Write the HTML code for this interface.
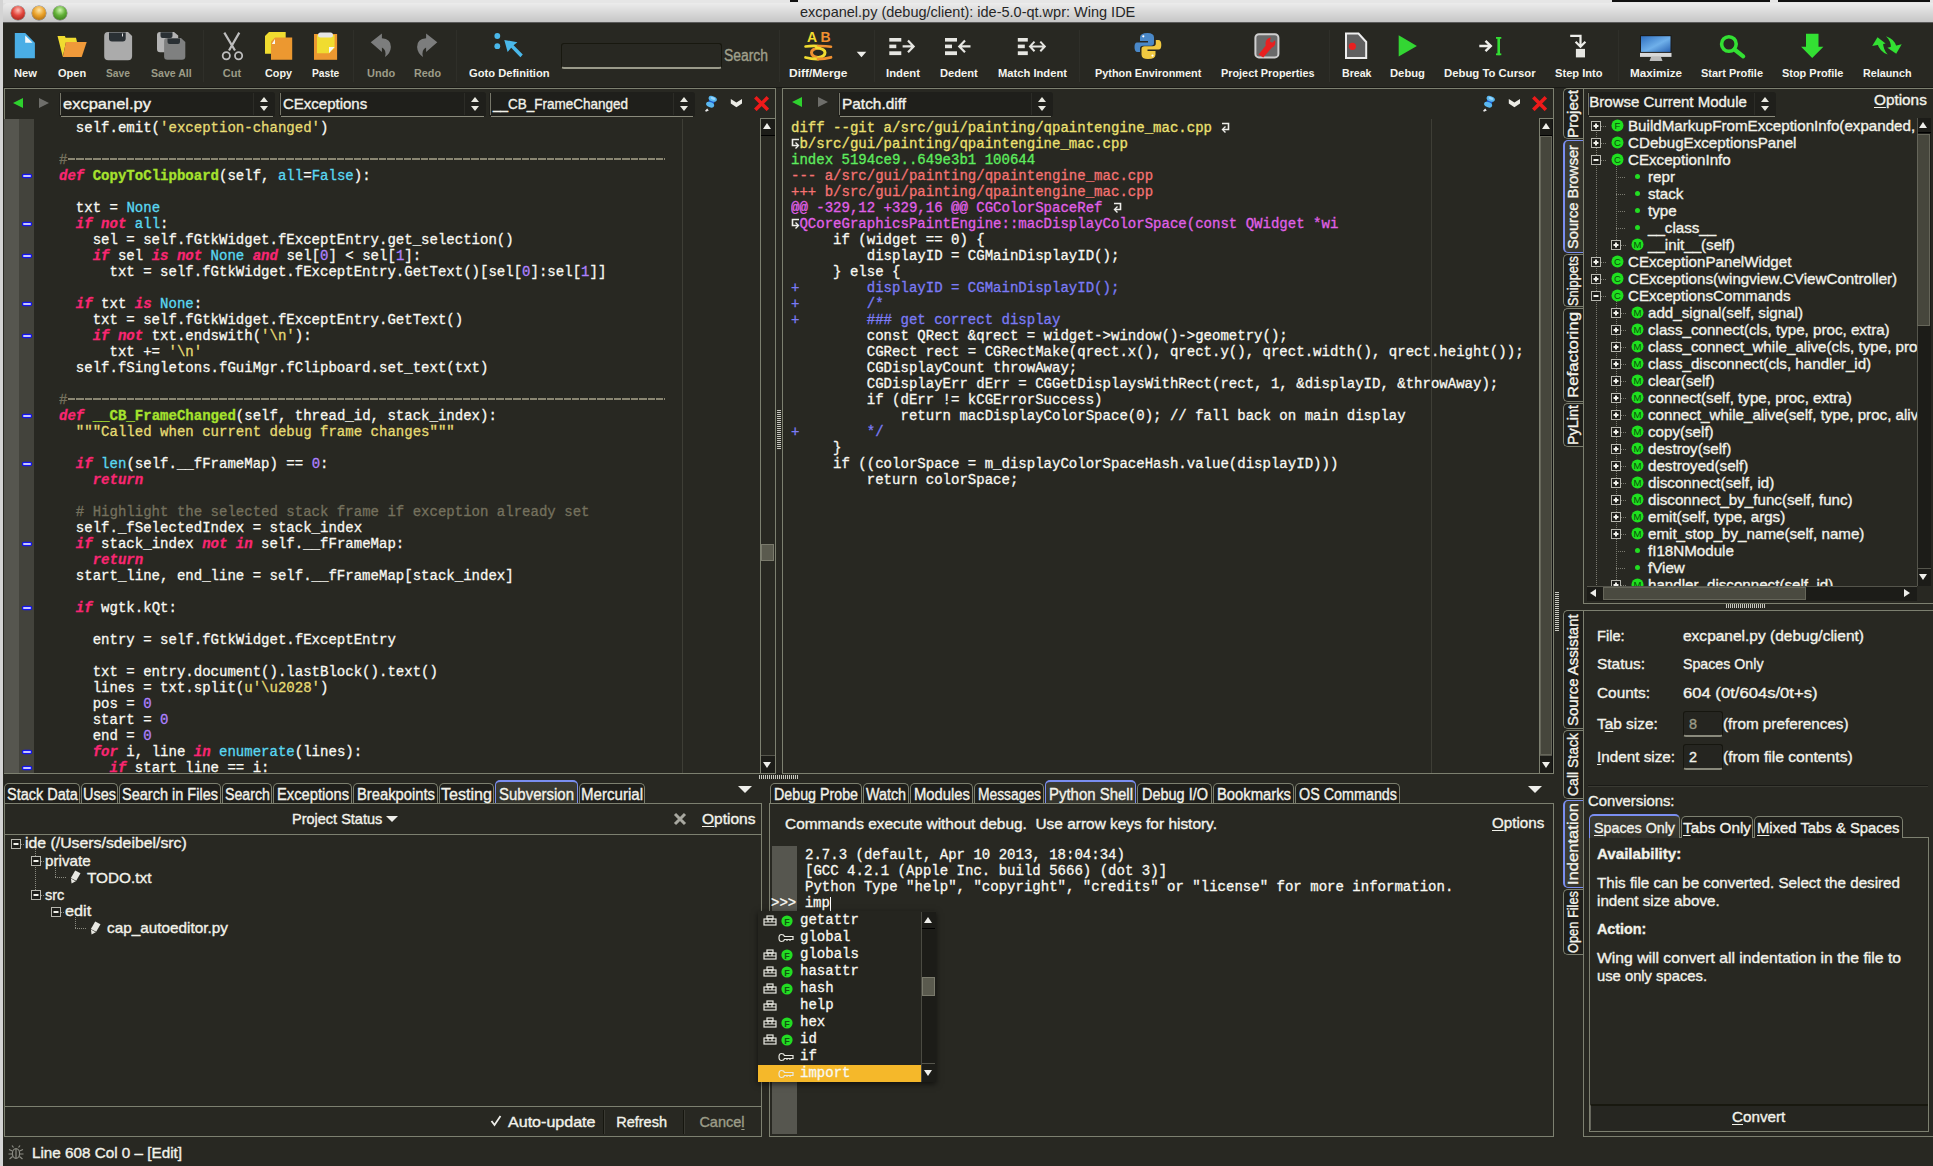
<!DOCTYPE html><html><head><meta charset="utf-8"><style>
*{box-sizing:border-box}
body{margin:0;width:1933px;height:1166px;overflow:hidden;background:#282822;position:relative;font-family:'Liberation Sans',sans-serif;color:#f2f2ea}
.a{position:absolute}
.t{position:absolute;white-space:pre;line-height:1;-webkit-text-stroke:0.35px currentColor}
u{text-decoration:underline;text-underline-offset:2px}
.m{font-family:"Liberation Mono",monospace;font-size:14.04px;white-space:pre;line-height:16px;-webkit-text-stroke:0.3px}
.k{color:#f92672;font-style:italic;font-weight:bold}
.g{color:#a6e22e;font-weight:bold}
.s{color:#e6db74}
.c{color:#5ad8f2}
.n{color:#ae81ff}
.cm{color:#75715e}
.dh{color:#ece070}
.di{color:#5eec5e}
.dm{color:#f47272}
.da{color:#e060e8}
.dp{color:#7b7bf5}
.wr{color:#c8c8c0}
</style></head><body>
<div class="a" style="left:0px;top:0px;width:1933px;height:3px;background:#e6e6e6;"></div>
<div class="a" style="left:790px;top:0px;width:8px;height:2px;background:#111;"></div>
<div class="a" style="left:1612px;top:0px;width:158px;height:2px;background:#111;"></div>
<div class="a" style="left:1778px;top:0px;width:152px;height:2px;background:#111;"></div>
<div class="a" style="left:0px;top:0px;width:3px;height:1166px;background:#d4d4d4;"></div>
<div class="a" style="left:3px;top:3px;width:8px;height:8px;background:#e0e0e0;"></div>
<div class="a" style="left:3px;top:3px;width:1930px;height:20px;background:linear-gradient(#ececec,#c4c4c4);border-top-left-radius:5px"></div>
<div class="a" style="left:3px;top:22px;width:1930px;height:1px;background:#5a5a5a;"></div>
<div class="t" style="left:800.00px;top:4.48px;font:normal normal 14.5px 'Liberation Sans';color:#262626;-webkit-text-stroke:0;">excpanel.py (debug/client): ide-5.0-qt.wpr: Wing IDE</div>
<div class="a" style="left:11px;top:5.5px;width:14px;height:14px;border-radius:7px;background:radial-gradient(circle at 50% 30%,#ffc0b8 0,#e2463c 45%,#8c1c14 100%);box-shadow:0 0 0 0.5px rgba(0,0,0,.45)"></div>
<div class="a" style="left:32px;top:5.5px;width:14px;height:14px;border-radius:7px;background:radial-gradient(circle at 50% 30%,#ffe6a8 0,#eaa22a 45%,#9a5a08 100%);box-shadow:0 0 0 0.5px rgba(0,0,0,.45)"></div>
<div class="a" style="left:53px;top:5.5px;width:14px;height:14px;border-radius:7px;background:radial-gradient(circle at 50% 30%,#d0f8b0 0,#62b038 45%,#2e6a14 100%);box-shadow:0 0 0 0.5px rgba(0,0,0,.45)"></div>
<svg class="a" style="left:0;top:0" width="1933" height="90" viewBox="0 0 1933 90"><path d="M14.8 33.1 H25.2 L34.9 42.8 V58.3 H14.8 Z" fill="#4aaee6"/><path d="M25.2 35.5 V42.8 H32.6 Z" fill="#f4f8fa"/><path d="M57.5 36.1 H64.9 L65.6 37.8 H76 L77 42 L66 42 L62.8 56.8 Z" fill="#f0dc30"/><path d="M65.9 42.1 H86.7 L81.7 57 H62.8 Z" fill="#f09a3a"/><path d="M108 32 H128 L132.1 36 V56 Q132.1 60.3 128 60.3 H108.3 Q104.2 60.3 104.2 56 V36 Q104.2 32 108 32 Z" fill="#ababab"/><path d="M109 32.5 H125.7 V38.5 Q125.7 41.5 122.7 41.5 H112 Q109 41.5 109 38.5 Z" fill="#2a3034"/><rect x="122" y="33.5" width="1" height="3" fill="#ddd"/><path d="M160 32 H174 L178.2 35.5 V49 Q178.2 52.2 175 52.2 H160 Q157 52.2 157 49 V35 Q157 32 160 32 Z" fill="#b4b4b4"/><path d="M160.5 32.3 H172.5 V36 Q172.5 38 170.5 38 H162.5 Q160.5 38 160.5 36 Z" fill="#2a3034"/><path d="M167 38.1 H181 L185.3 42 V56.5 Q185.3 59.8 182 59.8 H167.3 Q164.1 59.8 164.1 56.5 V41.3 Q164.1 38.1 167 38.1 Z" fill="#7f8080"/><path d="M167.5 38.4 H180 V42 Q180 44 178 44 H169.5 Q167.5 44 167.5 42 Z" fill="#2a3034"/><g stroke="#bdbdbd" fill="none"><path d="M224.3 32.6 L235 50.5 M239.3 32.6 L229 50.5" stroke-width="2.2"/><circle cx="226.3" cy="55.8" r="3.6" stroke-width="1.8"/><circle cx="238.6" cy="55.8" r="3.6" stroke-width="1.8"/></g><path d="M269 32 H285.7 V53.7 H265 V36 Z" fill="#f0dc30"/><path d="M275 37.6 H292.2 V59.8 H271 V41.6 Z" fill="#ec9830"/><path d="M275 39 V44 H271.8 Z" fill="#f8f8f4"/><rect x="314" y="34" width="23.1" height="25.8" fill="#ec9830"/><path d="M317 35 H334.6 V48 L329 53.2 H317 Z" fill="#f0dc30"/><path d="M334.6 47 L329 53.2 V47 Z" fill="#f8f8f4"/><rect x="318" y="32.6" width="15" height="5" rx="2.5" fill="#e4e4e4"/><path d="M370.7 42.2 L381.9 33.4 V38.3 Q391 38.8 390.9 47 Q390.6 53 385 57.1 Q387 50 381.9 47.5 V52 Z" fill="#7c7d7d"/><g transform="translate(808,0) scale(-1,1)"><path d="M370.7 42.2 L381.9 33.4 V38.3 Q391 38.8 390.9 47 Q390.6 53 385 57.1 Q387 50 381.9 47.5 V52 Z" fill="#7c7d7d"/></g><g fill="#4ab8ea"><circle cx="497.3" cy="36" r="2.9"/><circle cx="497.3" cy="46.2" r="2.9"/><path d="M504.3 39.9 L517.4 42.2 L513.6 45.2 L522.8 54.6 L520.4 57.2 L511.2 47.8 L507.6 52 Z"/></g><text x="812" y="42.2" font-family="Liberation Sans" font-size="14" font-weight="bold" text-anchor="middle" fill="#f0dc30">A</text><text x="825.5" y="42.2" font-family="Liberation Sans" font-size="14" font-weight="bold" text-anchor="middle" fill="#f09030">B</text><g fill="none" stroke-linecap="round"><path d="M805.5 46.5 Q812 45.5 818 46" stroke="#f0dc30" stroke-width="2.6"/><path d="M818 46 Q825 45.8 831 46.8" stroke="#f09030" stroke-width="2.6"/><path d="M819.5 47.8 Q811.5 49 811.5 52.5 Q811.5 56.5 818 57.5" stroke="#f09030" stroke-width="3"/><path d="M816.5 47.8 Q825 49 825 52.5 Q825 56.5 818.5 57.5" stroke="#f0dc30" stroke-width="3"/><path d="M805.5 57.5 Q812 59.2 818 59" stroke="#f0dc30" stroke-width="2.8"/><path d="M818 59 Q825 59 831 57.3" stroke="#f09030" stroke-width="2.8"/></g><path d="M856.7 51.7 H866.3 L861.5 57.2 Z" fill="#eeeeea"/><g fill="#e6e6e2"><rect x="889.3" y="38" width="12" height="3.6"/><rect x="889.3" y="44.6" width="7" height="3.6"/><rect x="889.3" y="51.3" width="12" height="3.8"/></g><g stroke="#e6e6e2" stroke-width="2.2" fill="none"><path d="M902.6 46.4 H913.5 M908 40.6 L913.6 46.4 L908 52.2"/></g><g fill="#e6e6e2"><rect x="945" y="38" width="12" height="3.6"/><rect x="945" y="44.6" width="7" height="3.6"/><rect x="945" y="51.3" width="12" height="3.8"/></g><g stroke="#e6e6e2" stroke-width="2.2" fill="none"><path d="M959.3 46.4 H970.5 M965 40.6 L959.3 46.4 L965 52.2"/></g><g fill="#e6e6e2"><rect x="1017.8" y="38" width="10" height="3.6"/><rect x="1017.8" y="44.6" width="7" height="3.6"/><rect x="1017.8" y="51.3" width="10" height="3.8"/></g><g stroke="#e6e6e2" stroke-width="2" fill="none"><path d="M1030 46.4 H1044.8 M1034.5 41.6 L1030 46.4 L1034.5 51.2 M1040.3 41.6 L1044.8 46.4 L1040.3 51.2"/></g><path d="M1147.5 33 Q1140 33 1140 37.5 V41 H1148 V42.5 H1137 Q1134.5 42.5 1134.5 47 Q1134.5 52 1137.5 52 H1140 V48.5 Q1140 45.8 1143 45.8 H1151 Q1154 45.8 1154 43 V37.5 Q1154 33 1147.5 33 Z" fill="#4a88c8"/><circle cx="1143.3" cy="36.3" r="1.1" fill="#fff"/><path d="M1148 58.9 Q1155.5 58.9 1155.5 54.4 V51 H1147.5 V49.5 H1158.5 Q1161.3 49.5 1161.3 45 Q1161.3 40 1158.3 40 H1155.8 V43.5 Q1155.8 46.2 1152.8 46.2 H1144.5 Q1141.5 46.2 1141.5 49 V54.4 Q1141.5 58.9 1148 58.9 Z" fill="#f0c840"/><circle cx="1152.5" cy="55.6" r="1.1" fill="#fff"/><rect x="1255.4" y="34.2" width="23" height="23.2" rx="3.5" fill="#6a6a6a" stroke="#cfcfcf" stroke-width="2"/><path d="M1258.6 54.6 L1265.8 45.6 Q1264.6 40.6 1268.5 38.2 L1270.8 37.6 L1269.8 41.4 L1272.2 42.8 L1275 40.2 Q1276.4 45 1272 47.6 L1263.2 57.6 Z" fill="#e82020"/><path d="M1346 33.6 H1358.5 L1366.2 42 V58 H1346 Z" fill="#606060" stroke="#eeeeee" stroke-width="2"/><circle cx="1352.4" cy="46.3" r="3.6" fill="#e82020"/><path d="M1398.7 35.3 L1416.9 46 L1398.7 56.6 Z" fill="#33d633"/><g stroke="#eeeeea" stroke-width="2.4" fill="none"><path d="M1479.3 46 H1490.5 M1485.5 40.8 L1490.8 46 L1485.5 51.2"/></g><g fill="#33dd33"><rect x="1497.4" y="37" width="2.6" height="18.2"/><rect x="1496" y="37" width="5.3" height="1.8"/><rect x="1496" y="53.4" width="5.3" height="1.8"/></g><g stroke="#eeeeea" stroke-width="2.2" fill="none"><path d="M1570.2 35.8 H1580.5 V46.5 M1575.6 41.8 L1580.5 46.8 L1585.4 41.8"/></g><rect x="1575.9" y="48.9" width="9.1" height="8.5" fill="#e6e6e2"/><defs><linearGradient id="scr" x1="0" y1="0" x2="1" y2="1"><stop offset="0" stop-color="#2f6fc0"/><stop offset=".55" stop-color="#6fb0ea"/><stop offset="1" stop-color="#2a64b4"/></linearGradient></defs><rect x="1640" y="35.2" width="31.5" height="17.7" fill="#1a1a1a"/><rect x="1641" y="36.2" width="29.5" height="15.7" fill="url(#scr)"/><rect x="1640" y="52.9" width="31.5" height="4" fill="#d8d8d8"/><path d="M1651 57 H1661 L1662.5 61 H1649.5 Z" fill="#bcbcbc"/><g stroke="#33e033" fill="none"><circle cx="1728.9" cy="44" r="7.3" stroke-width="3.6"/><path d="M1734.5 49.5 L1743.2 56.3" stroke-width="4.2" stroke-linecap="round"/></g><path d="M1806 33.7 H1818.5 V46.7 H1823.4 L1812.2 58.1 L1801.1 46.7 H1806 Z" fill="#33e033"/><g fill="#33e033"><path d="M1872.2 46 L1877.5 37.3 L1885.6 43.5 Z"/><path d="M1877.6 44 Q1879.5 51.5 1887.7 54.6 Q1883.4 50 1883 43 Z"/><path d="M1896.2 53.7 L1887.4 47.8 L1901.7 44.3 Z"/><path d="M1886 36.2 Q1894.5 39 1896.5 46.5 L1890.8 48 Q1891.5 41.5 1886 36.2 Z"/></g></svg>
<div class="t" style="left:14.00px;top:67.42px;font:normal bold 11px 'Liberation Sans';color:#f4f4ee;transform:scaleX(1.0166);transform-origin:0 0;-webkit-text-stroke:0;">New</div>
<div class="t" style="left:58.00px;top:67.42px;font:normal bold 11px 'Liberation Sans';color:#f4f4ee;-webkit-text-stroke:0;">Open</div>
<div class="t" style="left:106.00px;top:67.42px;font:normal bold 11px 'Liberation Sans';color:#9c9c88;transform:scaleX(0.9337);transform-origin:0 0;-webkit-text-stroke:0;">Save</div>
<div class="t" style="left:150.65px;top:67.42px;font:normal bold 11px 'Liberation Sans';color:#9c9c88;transform:scaleX(0.9598);transform-origin:0 0;-webkit-text-stroke:0;">Save All</div>
<div class="t" style="left:222.80px;top:67.42px;font:normal bold 11px 'Liberation Sans';color:#9c9c88;-webkit-text-stroke:0;">Cut</div>
<div class="t" style="left:264.90px;top:67.42px;font:normal bold 11px 'Liberation Sans';color:#f4f4ee;transform:scaleX(0.9818);transform-origin:0 0;-webkit-text-stroke:0;">Copy</div>
<div class="t" style="left:311.75px;top:67.42px;font:normal bold 11px 'Liberation Sans';color:#f4f4ee;transform:scaleX(0.9299);transform-origin:0 0;-webkit-text-stroke:0;">Paste</div>
<div class="t" style="left:367.00px;top:67.42px;font:normal bold 11px 'Liberation Sans';color:#9c9c88;-webkit-text-stroke:0;">Undo</div>
<div class="t" style="left:414.30px;top:67.42px;font:normal bold 11px 'Liberation Sans';color:#9c9c88;transform:scaleX(0.9818);transform-origin:0 0;-webkit-text-stroke:0;">Redo</div>
<div class="t" style="left:469.00px;top:67.42px;font:normal bold 11px 'Liberation Sans';color:#f4f4ee;transform:scaleX(1.0146);transform-origin:0 0;-webkit-text-stroke:0;">Goto Definition</div>
<div class="t" style="left:789.05px;top:67.42px;font:normal bold 11px 'Liberation Sans';color:#f4f4ee;transform:scaleX(1.0877);transform-origin:0 0;-webkit-text-stroke:0;">Diff/Merge</div>
<div class="t" style="left:886.00px;top:67.42px;font:normal bold 11px 'Liberation Sans';color:#f4f4ee;transform:scaleX(1.0303);transform-origin:0 0;-webkit-text-stroke:0;">Indent</div>
<div class="t" style="left:939.60px;top:67.42px;font:normal bold 11px 'Liberation Sans';color:#f4f4ee;transform:scaleX(1.0139);transform-origin:0 0;-webkit-text-stroke:0;">Dedent</div>
<div class="t" style="left:997.80px;top:67.42px;font:normal bold 11px 'Liberation Sans';color:#f4f4ee;transform:scaleX(1.0170);transform-origin:0 0;-webkit-text-stroke:0;">Match Indent</div>
<div class="t" style="left:1094.85px;top:67.42px;font:normal bold 11px 'Liberation Sans';color:#f4f4ee;transform:scaleX(0.9883);transform-origin:0 0;-webkit-text-stroke:0;">Python Environment</div>
<div class="t" style="left:1220.55px;top:67.42px;font:normal bold 11px 'Liberation Sans';color:#f4f4ee;transform:scaleX(0.9866);transform-origin:0 0;-webkit-text-stroke:0;">Project Properties</div>
<div class="t" style="left:1341.55px;top:67.42px;font:normal bold 11px 'Liberation Sans';color:#f4f4ee;transform:scaleX(0.9647);transform-origin:0 0;-webkit-text-stroke:0;">Break</div>
<div class="t" style="left:1390.00px;top:67.42px;font:normal bold 11px 'Liberation Sans';color:#f4f4ee;transform:scaleX(1.0224);transform-origin:0 0;-webkit-text-stroke:0;">Debug</div>
<div class="t" style="left:1444.15px;top:67.42px;font:normal bold 11px 'Liberation Sans';color:#f4f4ee;transform:scaleX(1.0302);transform-origin:0 0;-webkit-text-stroke:0;">Debug To Cursor</div>
<div class="t" style="left:1555.20px;top:67.42px;font:normal bold 11px 'Liberation Sans';color:#f4f4ee;transform:scaleX(1.0114);transform-origin:0 0;-webkit-text-stroke:0;">Step Into</div>
<div class="t" style="left:1630.00px;top:67.42px;font:normal bold 11px 'Liberation Sans';color:#f4f4ee;transform:scaleX(1.0629);transform-origin:0 0;-webkit-text-stroke:0;">Maximize</div>
<div class="t" style="left:1701.00px;top:67.42px;font:normal bold 11px 'Liberation Sans';color:#f4f4ee;transform:scaleX(0.9942);transform-origin:0 0;-webkit-text-stroke:0;">Start Profile</div>
<div class="t" style="left:1781.80px;top:67.42px;font:normal bold 11px 'Liberation Sans';color:#f4f4ee;transform:scaleX(0.9946);transform-origin:0 0;-webkit-text-stroke:0;">Stop Profile</div>
<div class="t" style="left:1862.55px;top:67.42px;font:normal bold 11px 'Liberation Sans';color:#f4f4ee;transform:scaleX(0.9795);transform-origin:0 0;-webkit-text-stroke:0;">Relaunch</div>
<div class="a" style="left:203px;top:30px;width:1px;height:52px;background:#2f2f29;"></div>
<div class="a" style="left:353px;top:30px;width:1px;height:52px;background:#2f2f29;"></div>
<div class="a" style="left:456px;top:30px;width:1px;height:52px;background:#2f2f29;"></div>
<div class="a" style="left:779px;top:30px;width:1px;height:52px;background:#2f2f29;"></div>
<div class="a" style="left:874px;top:30px;width:1px;height:52px;background:#2f2f29;"></div>
<div class="a" style="left:1079px;top:30px;width:1px;height:52px;background:#2f2f29;"></div>
<div class="a" style="left:1329px;top:30px;width:1px;height:52px;background:#2f2f29;"></div>
<div class="a" style="left:1618px;top:30px;width:1px;height:52px;background:#2f2f29;"></div>
<div class="a" style="left:561px;top:43px;width:161px;height:26px;background:#282822;border-radius:3px;border:1px solid #18180f;border-bottom:2px solid #9a9a8a"></div>
<div class="t" style="left:724.00px;top:46.70px;font:normal normal 16px 'Liberation Sans';color:#a0a08c;transform:scaleX(0.8678);transform-origin:0 0;">Search</div>
<div class="a" style="left:3px;top:87px;width:1930px;height:1px;background:#1a1a16;"></div>
<div class="a" style="left:4px;top:88px;width:772px;height:686px;border:1px solid #7d8070;"></div>
<div class="a" style="left:782px;top:88px;width:772px;height:686px;border:1px solid #7d8070;"></div>
<div class="a" style="left:13px;top:98px;width:0;height:0;border-top:5.5px solid transparent;border-bottom:5.5px solid transparent;border-right:10px solid #2ed12e"></div>
<div class="a" style="left:39px;top:98px;width:0;height:0;border-top:5.5px solid transparent;border-bottom:5.5px solid transparent;border-left:10px solid #6e6e6a"></div>
<div class="a" style="left:59px;top:92px;width:216px;height:25px;background:#1f1f1b;border-radius:3px"></div>
<div class="a" style="left:60px;top:93px;width:1px;height:22px;background:#77776a;"></div>
<div class="a" style="left:61px;top:116px;width:212px;height:1px;background:#8a8a7c;"></div>
<div class="a" style="left:253px;top:93px;width:1px;height:22px;background:#2c2c27;"></div>
<div class="a" style="left:260px;top:97px;width:0;height:0;border-left:4.0px solid transparent;border-right:4.0px solid transparent;border-bottom:5px solid #e8e8e0"></div>
<div class="a" style="left:260px;top:106px;width:0;height:0;border-left:4.0px solid transparent;border-right:4.0px solid transparent;border-top:5px solid #e8e8e0"></div>
<div class="t" style="left:63.00px;top:94.54px;font:normal normal 15px 'Liberation Sans';transform:scaleX(1.0991);transform-origin:0 0;">excpanel.py</div>
<div class="a" style="left:279px;top:92px;width:207px;height:25px;background:#1f1f1b;border-radius:3px"></div>
<div class="a" style="left:280px;top:93px;width:1px;height:22px;background:#77776a;"></div>
<div class="a" style="left:281px;top:116px;width:203px;height:1px;background:#8a8a7c;"></div>
<div class="a" style="left:464px;top:93px;width:1px;height:22px;background:#2c2c27;"></div>
<div class="a" style="left:471px;top:97px;width:0;height:0;border-left:4.0px solid transparent;border-right:4.0px solid transparent;border-bottom:5px solid #e8e8e0"></div>
<div class="a" style="left:471px;top:106px;width:0;height:0;border-left:4.0px solid transparent;border-right:4.0px solid transparent;border-top:5px solid #e8e8e0"></div>
<div class="t" style="left:283.00px;top:94.54px;font:normal normal 15px 'Liberation Sans';">CExceptions</div>
<div class="a" style="left:489px;top:92px;width:206px;height:25px;background:#1f1f1b;border-radius:3px"></div>
<div class="a" style="left:490px;top:93px;width:1px;height:22px;background:#77776a;"></div>
<div class="a" style="left:491px;top:116px;width:202px;height:1px;background:#8a8a7c;"></div>
<div class="a" style="left:673px;top:93px;width:1px;height:22px;background:#2c2c27;"></div>
<div class="a" style="left:680px;top:97px;width:0;height:0;border-left:4.0px solid transparent;border-right:4.0px solid transparent;border-bottom:5px solid #e8e8e0"></div>
<div class="a" style="left:680px;top:106px;width:0;height:0;border-left:4.0px solid transparent;border-right:4.0px solid transparent;border-top:5px solid #e8e8e0"></div>
<div class="t" style="left:493.00px;top:94.54px;font:normal normal 15px 'Liberation Sans';transform:scaleX(0.8994);transform-origin:0 0;">__CB_FrameChanged</div>
<svg class="a" style="left:703px;top:94px" width="16" height="18" viewBox="0 0 16 18"><path d="M5.8 16.5 L3 17.8 L2 16.8 L4.2 14.4 Z" fill="#e8e8e8"/><g transform="rotate(22 8 8)"><rect x="5.6" y="5" width="5.6" height="6" fill="#1a5ad0"/><ellipse cx="8.4" cy="4.4" rx="4.3" ry="2.6" fill="#5ab8f0"/><ellipse cx="8.2" cy="10.8" rx="4.2" ry="2.6" fill="#5ab8f0"/><ellipse cx="8.4" cy="4" rx="2.4" ry="1.2" fill="#9ad8ff"/></g></svg>
<svg class="a" style="left:729px;top:97px" width="14" height="12" viewBox="0 0 14 12"><path d="M1.8 2 L7.4 5.4 L13 2 L13 6.5 L7.4 10.3 L1.8 6.5 Z" fill="#ececE6"/></svg>
<svg class="a" style="left:754px;top:96px" width="15" height="15" viewBox="0 0 15 15"><path d="M2.6 2.6 L12.6 12.6 M12.6 2.6 L2.6 12.6" stroke="#ee1a1a" stroke-width="3.6" stroke-linecap="square"/></svg>
<div class="a" style="left:792px;top:97px;width:0;height:0;border-top:5.5px solid transparent;border-bottom:5.5px solid transparent;border-right:10px solid #2ed12e"></div>
<div class="a" style="left:818px;top:97px;width:0;height:0;border-top:5.5px solid transparent;border-bottom:5.5px solid transparent;border-left:10px solid #6e6e6a"></div>
<div class="a" style="left:838px;top:92px;width:215px;height:25px;background:#1f1f1b;border-radius:3px"></div>
<div class="a" style="left:839px;top:93px;width:1px;height:22px;background:#77776a;"></div>
<div class="a" style="left:840px;top:116px;width:211px;height:1px;background:#8a8a7c;"></div>
<div class="a" style="left:1031px;top:93px;width:1px;height:22px;background:#2c2c27;"></div>
<div class="a" style="left:1038px;top:97px;width:0;height:0;border-left:4.0px solid transparent;border-right:4.0px solid transparent;border-bottom:5px solid #e8e8e0"></div>
<div class="a" style="left:1038px;top:106px;width:0;height:0;border-left:4.0px solid transparent;border-right:4.0px solid transparent;border-top:5px solid #e8e8e0"></div>
<div class="t" style="left:842.00px;top:94.54px;font:normal normal 15px 'Liberation Sans';transform:scaleX(1.0279);transform-origin:0 0;">Patch.diff</div>
<svg class="a" style="left:1481px;top:94px" width="16" height="18" viewBox="0 0 16 18"><path d="M5.8 16.5 L3 17.8 L2 16.8 L4.2 14.4 Z" fill="#e8e8e8"/><g transform="rotate(22 8 8)"><rect x="5.6" y="5" width="5.6" height="6" fill="#1a5ad0"/><ellipse cx="8.4" cy="4.4" rx="4.3" ry="2.6" fill="#5ab8f0"/><ellipse cx="8.2" cy="10.8" rx="4.2" ry="2.6" fill="#5ab8f0"/><ellipse cx="8.4" cy="4" rx="2.4" ry="1.2" fill="#9ad8ff"/></g></svg>
<svg class="a" style="left:1507px;top:97px" width="14" height="12" viewBox="0 0 14 12"><path d="M1.8 2 L7.4 5.4 L13 2 L13 6.5 L7.4 10.3 L1.8 6.5 Z" fill="#ececE6"/></svg>
<svg class="a" style="left:1532px;top:96px" width="15" height="15" viewBox="0 0 15 15"><path d="M2.6 2.6 L12.6 12.6 M12.6 2.6 L2.6 12.6" stroke="#ee1a1a" stroke-width="3.6" stroke-linecap="square"/></svg>
<div class="a" style="left:4px;top:119px;width:15px;height:654px;background:#56564f;"></div>
<div class="a" style="left:19px;top:119px;width:15px;height:654px;background:#43433c;"></div>
<div class="a" style="left:22.5px;top:175px;width:8px;height:2px;background:#c4c4ff;border-radius:1px;box-shadow:0 0 0 1.2px #1414f0"></div>
<div class="a" style="left:22.5px;top:223px;width:8px;height:2px;background:#c4c4ff;border-radius:1px;box-shadow:0 0 0 1.2px #1414f0"></div>
<div class="a" style="left:22.5px;top:255px;width:8px;height:2px;background:#c4c4ff;border-radius:1px;box-shadow:0 0 0 1.2px #1414f0"></div>
<div class="a" style="left:22.5px;top:303px;width:8px;height:2px;background:#c4c4ff;border-radius:1px;box-shadow:0 0 0 1.2px #1414f0"></div>
<div class="a" style="left:22.5px;top:335px;width:8px;height:2px;background:#c4c4ff;border-radius:1px;box-shadow:0 0 0 1.2px #1414f0"></div>
<div class="a" style="left:22.5px;top:415px;width:8px;height:2px;background:#c4c4ff;border-radius:1px;box-shadow:0 0 0 1.2px #1414f0"></div>
<div class="a" style="left:22.5px;top:463px;width:8px;height:2px;background:#c4c4ff;border-radius:1px;box-shadow:0 0 0 1.2px #1414f0"></div>
<div class="a" style="left:22.5px;top:543px;width:8px;height:2px;background:#c4c4ff;border-radius:1px;box-shadow:0 0 0 1.2px #1414f0"></div>
<div class="a" style="left:22.5px;top:607px;width:8px;height:2px;background:#c4c4ff;border-radius:1px;box-shadow:0 0 0 1.2px #1414f0"></div>
<div class="a" style="left:22.5px;top:751px;width:8px;height:2px;background:#c4c4ff;border-radius:1px;box-shadow:0 0 0 1.2px #1414f0"></div>
<div class="a" style="left:22.5px;top:767px;width:8px;height:2px;background:#c4c4ff;border-radius:1px;box-shadow:0 0 0 1.2px #1414f0"></div>
<div class="a" style="left:682px;top:119px;width:1px;height:654px;background:#3e3e36;"></div>
<div class="a m" style="left:59px;top:120px;width:700px;height:653px;overflow:hidden;color:#f8f8f2">  self.emit(<span class="s">'exception-changed'</span>)

<span class="cm">#</span>
<span class="k">def</span> <span class="g">CopyToClipboard</span>(self, <span class="c">all</span>=<span class="c">False</span>):

  txt = <span class="c">None</span>
  <span class="k">if</span> <span class="k">not</span> <span class="c">all</span>:
    sel = self.fGtkWidget.fExceptEntry.get_selection()
    <span class="k">if</span> sel <span class="k">is</span> <span class="k">not</span> <span class="c">None</span> <span class="k">and</span> sel[<span class="n">0</span>] &lt; sel[<span class="n">1</span>]:
      txt = self.fGtkWidget.fExceptEntry.GetText()[sel[<span class="n">0</span>]:sel[<span class="n">1</span>]]

  <span class="k">if</span> txt <span class="k">is</span> <span class="c">None</span>:
    txt = self.fGtkWidget.fExceptEntry.GetText()
    <span class="k">if</span> <span class="k">not</span> txt.endswith(<span class="s">'\n'</span>):
      txt += <span class="s">'\n'</span>
  self.fSingletons.fGuiMgr.fClipboard.set_text(txt)

<span class="cm">#</span>
<span class="k">def</span> <span class="g">__CB_FrameChanged</span>(self, thread_id, stack_index):
  <span class="s">"""Called when current debug frame changes"""</span>

  <span class="k">if</span> <span class="c">len</span>(self.__fFrameMap) == <span class="n">0</span>:
    <span class="k">return</span>

  <span class="cm"># Highlight the selected stack frame if exception already set</span>
  self._fSelectedIndex = stack_index
  <span class="k">if</span> stack_index <span class="k">not</span> <span class="k">in</span> self.__fFrameMap:
    <span class="k">return</span>
  start_line, end_line = self.__fFrameMap[stack_index]

  <span class="k">if</span> wgtk.kQt:

    entry = self.fGtkWidget.fExceptEntry

    txt = entry.document().lastBlock().text()
    lines = txt.split(<span class="s">u'\u2028'</span>)
    pos = <span class="n">0</span>
    start = <span class="n">0</span>
    end = <span class="n">0</span>
    <span class="k">for</span> i, line <span class="k">in</span> <span class="c">enumerate</span>(lines):
      <span class="k">if</span> start_line == i:</div>
<div class="a" style="left:68px;top:158px;width:597px;height:2px;background:repeating-linear-gradient(90deg,#8a8672 0 7.4px,transparent 7.4px 8.4px)"></div>
<div class="a" style="left:68px;top:398px;width:597px;height:2px;background:repeating-linear-gradient(90deg,#8a8672 0 7.4px,transparent 7.4px 8.4px)"></div>
<div class="a" style="left:760px;top:118px;width:15px;height:655px;background:#282822;border-left:1px solid #7d8070;border-top:1px solid #7d8070"></div>
<div class="a" style="left:761px;top:119px;width:14px;height:16px;background:#1c1c18;"></div>
<div class="a" style="left:761px;top:135px;width:14px;height:1px;background:#000;"></div>
<div class="a" style="left:761px;top:756px;width:14px;height:17px;background:#1c1c18;"></div>
<div class="a" style="left:761px;top:755px;width:14px;height:1px;background:#55554c;"></div>
<div class="a" style="left:761px;top:544px;width:13px;height:17px;background:#5a5a4e;border:1px solid #7a7a6c"></div>
<div class="a" style="left:763px;top:123px;width:0;height:0;border-left:4.5px solid transparent;border-right:4.5px solid transparent;border-bottom:6px solid #eeeeea"></div>
<div class="a" style="left:763px;top:762px;width:0;height:0;border-left:4.5px solid transparent;border-right:4.5px solid transparent;border-top:6px solid #eeeeea"></div>
<div class="a" style="left:1431px;top:119px;width:1px;height:654px;background:#3e3e36;"></div>
<svg class="a" style="left:1221px;top:122px" width="10" height="12" viewBox="0 0 10 12"><path d="M1 1.5 H7.5 V7.5 H2" stroke="#eeeeea" stroke-width="1.6" fill="none"/><path d="M4.5 4.5 L1.5 7.5 L4.5 10.5" stroke="#eeeeea" stroke-width="1.4" fill="none"/></svg>
<svg class="a" style="left:1113px;top:202px" width="10" height="12" viewBox="0 0 10 12"><path d="M1 1.5 H7.5 V7.5 H2" stroke="#eeeeea" stroke-width="1.6" fill="none"/><path d="M4.5 4.5 L1.5 7.5 L4.5 10.5" stroke="#eeeeea" stroke-width="1.4" fill="none"/></svg>
<svg class="a" style="left:791px;top:138px" width="10" height="12" viewBox="0 0 10 12"><path d="M8 1.5 H1.5 V7.5 H7" stroke="#eeeeea" stroke-width="1.6" fill="none"/><path d="M4.5 4.5 L7.5 7.5 L4.5 10.5" stroke="#eeeeea" stroke-width="1.4" fill="none"/></svg>
<svg class="a" style="left:791px;top:218px" width="10" height="12" viewBox="0 0 10 12"><path d="M8 1.5 H1.5 V7.5 H7" stroke="#eeeeea" stroke-width="1.6" fill="none"/><path d="M4.5 4.5 L7.5 7.5 L4.5 10.5" stroke="#eeeeea" stroke-width="1.4" fill="none"/></svg>
<div class="a m" style="left:791px;top:120px;width:748px;height:653px;overflow:hidden;color:#f8f8f2"><span class="dh">diff --git a/src/gui/painting/qpaintengine_mac.cpp</span>   
 <span class="dh">b/src/gui/painting/qpaintengine_mac.cpp</span>
<span class="di">index 5194ce9..649e3b1 100644</span>
<span class="dm">--- a/src/gui/painting/qpaintengine_mac.cpp</span>
<span class="dm">+++ b/src/gui/painting/qpaintengine_mac.cpp</span>
<span class="da">@@ -329,12 +329,16 @@ CGColorSpaceRef</span>   
 <span class="da">QCoreGraphicsPaintEngine::macDisplayColorSpace(const QWidget *wi</span>
     if (widget == 0) {
         displayID = CGMainDisplayID();
     } else {
<span class="dp">+        displayID = CGMainDisplayID();</span>
<span class="dp">+        /*</span>
<span class="dp">+        ### get correct display</span>
         const QRect &amp;qrect = widget-&gt;window()-&gt;geometry();
         CGRect rect = CGRectMake(qrect.x(), qrect.y(), qrect.width(), qrect.height());
         CGDisplayCount throwAway;
         CGDisplayErr dErr = CGGetDisplaysWithRect(rect, 1, &amp;displayID, &amp;throwAway);
         if (dErr != kCGErrorSuccess)
             return macDisplayColorSpace(0); // fall back on main display
<span class="dp">+        */</span>
     }
     if ((colorSpace = m_displayColorSpaceHash.value(displayID)))
         return colorSpace;</div>
<div class="a" style="left:1539px;top:118px;width:14px;height:655px;background:#282822;border-left:1px solid #7d8070;border-top:1px solid #7d8070"></div>
<div class="a" style="left:1540px;top:119px;width:13px;height:16px;background:#1c1c18;"></div>
<div class="a" style="left:1540px;top:135px;width:13px;height:1px;background:#000;"></div>
<div class="a" style="left:1540px;top:756px;width:13px;height:17px;background:#1c1c18;"></div>
<div class="a" style="left:1540px;top:755px;width:13px;height:1px;background:#55554c;"></div>
<div class="a" style="left:1540px;top:136px;width:12px;height:619px;background:#46463c;border:1px solid #66665a"></div>
<div class="a" style="left:1552px;top:119px;width:1px;height:654px;background:#111;"></div>
<div class="a" style="left:1542px;top:123px;width:0;height:0;border-left:4.5px solid transparent;border-right:4.5px solid transparent;border-bottom:6px solid #eeeeea"></div>
<div class="a" style="left:1542px;top:762px;width:0;height:0;border-left:4.5px solid transparent;border-right:4.5px solid transparent;border-top:6px solid #eeeeea"></div>
<div class="a" style="left:777px;top:410px;width:4px;height:40px;background:repeating-linear-gradient(#c8c8c0 0 1px,transparent 1px 2px)"></div>
<div class="a" style="left:759px;top:775px;width:40px;height:4px;background:repeating-linear-gradient(90deg,#c8c8c0 0 1px,transparent 1px 2px)"></div>
<div class="a" style="left:1555px;top:592px;width:4px;height:40px;background:repeating-linear-gradient(#c8c8c0 0 1px,transparent 1px 2px)"></div>
<div class="a" style="left:1726px;top:604px;width:40px;height:4px;background:repeating-linear-gradient(90deg,#c8c8c0 0 1px,transparent 1px 2px)"></div>
<div class="a" style="left:4px;top:803px;width:758px;height:334px;border:1px solid #7d8070;"></div>
<div class="a" style="left:4px;top:783px;width:76px;height:20px;border:1px solid #7d8070;border-bottom:none;border-radius:5px 5px 0 0;background:#1f1f1b;"></div>
<div class="t" style="left:6.60px;top:785.50px;font:normal normal 16px 'Liberation Sans';transform:scaleX(0.9046);transform-origin:0 0;">Stack Data</div>
<div class="a" style="left:81px;top:783px;width:37px;height:20px;border:1px solid #7d8070;border-bottom:none;border-radius:5px 5px 0 0;background:#1f1f1b;"></div>
<div class="t" style="left:83.00px;top:785.50px;font:normal normal 16px 'Liberation Sans';transform:scaleX(0.9053);transform-origin:0 0;">Uses</div>
<div class="a" style="left:119px;top:783px;width:102px;height:20px;border:1px solid #7d8070;border-bottom:none;border-radius:5px 5px 0 0;background:#1f1f1b;"></div>
<div class="t" style="left:122.00px;top:785.50px;font:normal normal 16px 'Liberation Sans';transform:scaleX(0.9071);transform-origin:0 0;">Search in Files</div>
<div class="a" style="left:222px;top:783px;width:50px;height:20px;border:1px solid #7d8070;border-bottom:none;border-radius:5px 5px 0 0;background:#1f1f1b;"></div>
<div class="t" style="left:224.50px;top:785.50px;font:normal normal 16px 'Liberation Sans';transform:scaleX(0.8875);transform-origin:0 0;">Search</div>
<div class="a" style="left:273px;top:783px;width:79px;height:20px;border:1px solid #7d8070;border-bottom:none;border-radius:5px 5px 0 0;background:#1f1f1b;"></div>
<div class="t" style="left:276.50px;top:785.50px;font:normal normal 16px 'Liberation Sans';transform:scaleX(0.9199);transform-origin:0 0;">Exceptions</div>
<div class="a" style="left:353px;top:783px;width:85px;height:20px;border:1px solid #7d8070;border-bottom:none;border-radius:5px 5px 0 0;background:#1f1f1b;"></div>
<div class="t" style="left:356.50px;top:785.50px;font:normal normal 16px 'Liberation Sans';transform:scaleX(0.9231);transform-origin:0 0;">Breakpoints</div>
<div class="a" style="left:439px;top:783px;width:55px;height:20px;border:1px solid #7d8070;border-bottom:none;border-radius:5px 5px 0 0;background:#1f1f1b;"></div>
<div class="t" style="left:441.00px;top:785.50px;font:normal normal 16px 'Liberation Sans';transform:scaleX(1.0059);transform-origin:0 0;">Testing</div>
<div class="a" style="left:495px;top:780px;width:83px;height:23px;border:1px solid #7d8070;border-bottom:none;border-radius:5px 5px 0 0;background:#1f1f1b;background:linear-gradient(#3c3c34,#33332c);border-top:2px solid #7a8ef0;border-left:1px solid #7a8ef0;border-right:1px solid #7a8ef0;"></div>
<div class="t" style="left:499.00px;top:785.50px;font:normal normal 16px 'Liberation Sans';transform:scaleX(0.9370);transform-origin:0 0;">Subversion</div>
<div class="a" style="left:579px;top:783px;width:66px;height:20px;border:1px solid #7d8070;border-bottom:none;border-radius:5px 5px 0 0;background:#1f1f1b;"></div>
<div class="t" style="left:581.00px;top:785.50px;font:normal normal 16px 'Liberation Sans';transform:scaleX(0.9423);transform-origin:0 0;">Mercurial</div>
<div class="a" style="left:738px;top:786px;width:0;height:0;border-left:7.0px solid transparent;border-right:7.0px solid transparent;border-top:7px solid #eeeeea"></div>
<div class="t" style="left:292.00px;top:810.90px;font:normal normal 14.5px 'Liberation Sans';">Project Status</div>
<div class="a" style="left:386px;top:816px;width:0;height:0;border-left:6.0px solid transparent;border-right:6.0px solid transparent;border-top:6px solid #eeeeea"></div>
<svg class="a" style="left:673px;top:812px" width="14" height="14" viewBox="0 0 14 14"><path d="M2 2 L12 12 M12 2 L2 12" stroke="#a8a8a0" stroke-width="3"/></svg>
<div class="t" style="left:701.50px;top:810.50px;font:normal normal 14.5px 'Liberation Sans';transform:scaleX(1.0703);transform-origin:0 0;"><u>O</u>ptions</div>
<div class="a" style="left:5px;top:834px;width:756px;height:1px;background:#7d8070;"></div>
<svg class="a" style="left:10.5px;top:838.5px" width="10" height="10" viewBox="0 0 10 10"><rect x="0.5" y="0.5" width="9" height="9" fill="#1e1e1a" stroke="#b8b8b0"/><path d="M2.5 5 H7.5" stroke="#f0f0ea" stroke-width="2"/></svg>
<div class="a" style="left:20.5px;top:843.5px;width:4px;height:1px;background:repeating-linear-gradient(90deg,#8a8a80 0 1px,transparent 1px 2px)"></div>
<div class="t" style="left:25.00px;top:834.44px;font:normal normal 15px 'Liberation Sans';transform:scaleX(1.0548);transform-origin:0 0;">ide (/Users/sdeibel/src)</div>
<div class="a" style="left:35px;top:849px;width:1px;height:51px;background:repeating-linear-gradient(#8a8a80 0 1px,transparent 1px 2px)"></div>
<svg class="a" style="left:30.5px;top:855.5px" width="10" height="10" viewBox="0 0 10 10"><rect x="0.5" y="0.5" width="9" height="9" fill="#1e1e1a" stroke="#b8b8b0"/><path d="M2.5 5 H7.5" stroke="#f0f0ea" stroke-width="2"/></svg>
<div class="a" style="left:40.5px;top:860.5px;width:4px;height:1px;background:repeating-linear-gradient(90deg,#8a8a80 0 1px,transparent 1px 2px)"></div>
<div class="t" style="left:45.20px;top:851.74px;font:normal normal 15px 'Liberation Sans';transform:scaleX(1.0126);transform-origin:0 0;">private</div>
<div class="a" style="left:55px;top:866px;width:1px;height:11px;background:repeating-linear-gradient(#8a8a80 0 1px,transparent 1px 2px)"></div>
<div class="a" style="left:55px;top:877px;width:11px;height:1px;background:repeating-linear-gradient(90deg,#8a8a80 0 1px,transparent 1px 2px)"></div>
<svg class="a" style="left:70px;top:869px" width="12" height="15" viewBox="0 0 12 15"><path d="M5.2 1.5 L10.5 4.2 L6.2 11.8 L0.9 9.1 Z" fill="#e8e8e2"/><path d="M0.9 9.6 L5.8 12.2 L1.6 14.6 Z" fill="#e8e8e2"/></svg>
<div class="t" style="left:86.80px;top:868.74px;font:normal normal 15px 'Liberation Sans';transform:scaleX(1.0228);transform-origin:0 0;">TODO.txt</div>
<svg class="a" style="left:30.5px;top:889.5px" width="10" height="10" viewBox="0 0 10 10"><rect x="0.5" y="0.5" width="9" height="9" fill="#1e1e1a" stroke="#b8b8b0"/><path d="M2.5 5 H7.5" stroke="#f0f0ea" stroke-width="2"/></svg>
<div class="a" style="left:40.5px;top:894.5px;width:4px;height:1px;background:repeating-linear-gradient(90deg,#8a8a80 0 1px,transparent 1px 2px)"></div>
<div class="t" style="left:45.20px;top:885.74px;font:normal normal 15px 'Liberation Sans';transform:scaleX(0.9700);transform-origin:0 0;">src</div>
<svg class="a" style="left:50.5px;top:906.5px" width="10" height="10" viewBox="0 0 10 10"><rect x="0.5" y="0.5" width="9" height="9" fill="#1e1e1a" stroke="#b8b8b0"/><path d="M2.5 5 H7.5" stroke="#f0f0ea" stroke-width="2"/></svg>
<div class="a" style="left:60.5px;top:911.5px;width:4px;height:1px;background:repeating-linear-gradient(90deg,#8a8a80 0 1px,transparent 1px 2px)"></div>
<div class="t" style="left:64.60px;top:902.24px;font:normal normal 15px 'Liberation Sans';transform:scaleX(1.0832);transform-origin:0 0;">edit</div>
<div class="a" style="left:75px;top:917px;width:1px;height:11px;background:repeating-linear-gradient(#8a8a80 0 1px,transparent 1px 2px)"></div>
<div class="a" style="left:75px;top:928px;width:11px;height:1px;background:repeating-linear-gradient(90deg,#8a8a80 0 1px,transparent 1px 2px)"></div>
<svg class="a" style="left:90px;top:920px" width="12" height="15" viewBox="0 0 12 15"><path d="M5.2 1.5 L10.5 4.2 L6.2 11.8 L0.9 9.1 Z" fill="#e8e8e2"/><path d="M0.9 9.6 L5.8 12.2 L1.6 14.6 Z" fill="#e8e8e2"/></svg>
<div class="t" style="left:107.00px;top:919.14px;font:normal normal 15px 'Liberation Sans';transform:scaleX(1.0216);transform-origin:0 0;">cap_autoeditor.py</div>
<div class="a" style="left:5px;top:1106px;width:756px;height:1px;background:#7d8070;"></div>
<svg class="a" style="left:490px;top:1115px" width="12" height="12" viewBox="0 0 12 12"><path d="M1.5 6 L4.5 10 L10.5 1" stroke="#eeeeea" stroke-width="1.8" fill="none"/></svg>
<div class="t" style="left:507.70px;top:1113.50px;font:normal normal 14.5px 'Liberation Sans';transform:scaleX(1.1074);transform-origin:0 0;">Auto-update</div>
<div class="a" style="left:603px;top:1110px;width:1px;height:24px;background:#16160f;"></div>
<div class="a" style="left:604px;top:1110px;width:1px;height:24px;background:#3a3a33;"></div>
<div class="t" style="left:616.20px;top:1113.50px;font:normal normal 14.5px 'Liberation Sans';">Refresh</div>
<div class="a" style="left:683px;top:1110px;width:1px;height:24px;background:#16160f;"></div>
<div class="a" style="left:684px;top:1110px;width:1px;height:24px;background:#3a3a33;"></div>
<div class="t" style="left:699.40px;top:1113.50px;font:normal normal 14.5px 'Liberation Sans';color:#9c9c88;">Cance<u>l</u></div>
<svg class="a" style="left:7px;top:1143px" width="18" height="18" viewBox="0 0 18 18"><g stroke="#8c8c84" stroke-width="1.2" fill="none"><ellipse cx="9" cy="10.5" rx="3.6" ry="4.8"/><path d="M9 6v9M6.5 4.5 L5 2.5M11.5 4.5 L13 2.5M5.4 8 L2 6.5M12.6 8 L16 6.5M5.2 11 H1.5M12.8 11 H16.5M5.6 13.5 L2.5 16M12.4 13.5 L15.5 16"/></g></svg>
<div class="t" style="left:32.30px;top:1144.50px;font:normal normal 14.5px 'Liberation Sans';transform:scaleX(1.0512);transform-origin:0 0;">Line 608 Col 0 – [Edit]</div>
<div class="a" style="left:769px;top:803px;width:785px;height:334px;border:1px solid #7d8070;"></div>
<div class="a" style="left:770px;top:783px;width:92px;height:20px;border:1px solid #7d8070;border-bottom:none;border-radius:5px 5px 0 0;background:#1f1f1b;"></div>
<div class="t" style="left:774.00px;top:785.50px;font:normal normal 16px 'Liberation Sans';transform:scaleX(0.8908);transform-origin:0 0;">Debug Probe</div>
<div class="a" style="left:863px;top:783px;width:46px;height:20px;border:1px solid #7d8070;border-bottom:none;border-radius:5px 5px 0 0;background:#1f1f1b;"></div>
<div class="t" style="left:866.00px;top:785.50px;font:normal normal 16px 'Liberation Sans';transform:scaleX(0.8939);transform-origin:0 0;">Watch</div>
<div class="a" style="left:910px;top:783px;width:63px;height:20px;border:1px solid #7d8070;border-bottom:none;border-radius:5px 5px 0 0;background:#1f1f1b;"></div>
<div class="t" style="left:913.50px;top:785.50px;font:normal normal 16px 'Liberation Sans';transform:scaleX(0.9259);transform-origin:0 0;">Modules</div>
<div class="a" style="left:974px;top:783px;width:70px;height:20px;border:1px solid #7d8070;border-bottom:none;border-radius:5px 5px 0 0;background:#1f1f1b;"></div>
<div class="t" style="left:977.50px;top:785.50px;font:normal normal 16px 'Liberation Sans';transform:scaleX(0.8639);transform-origin:0 0;">Messages</div>
<div class="a" style="left:1045px;top:780px;width:91px;height:23px;border:1px solid #7d8070;border-bottom:none;border-radius:5px 5px 0 0;background:#1f1f1b;background:linear-gradient(#3c3c34,#33332c);border-top:2px solid #7a8ef0;border-left:1px solid #7a8ef0;border-right:1px solid #7a8ef0;"></div>
<div class="t" style="left:1048.50px;top:785.50px;font:normal normal 16px 'Liberation Sans';transform:scaleX(0.9350);transform-origin:0 0;">Python Shell</div>
<div class="a" style="left:1137px;top:783px;width:75px;height:20px;border:1px solid #7d8070;border-bottom:none;border-radius:5px 5px 0 0;background:#1f1f1b;"></div>
<div class="t" style="left:1141.50px;top:785.50px;font:normal normal 16px 'Liberation Sans';transform:scaleX(0.9049);transform-origin:0 0;">Debug I/O</div>
<div class="a" style="left:1213px;top:783px;width:81px;height:20px;border:1px solid #7d8070;border-bottom:none;border-radius:5px 5px 0 0;background:#1f1f1b;"></div>
<div class="t" style="left:1216.50px;top:785.50px;font:normal normal 16px 'Liberation Sans';transform:scaleX(0.9246);transform-origin:0 0;">Bookmarks</div>
<div class="a" style="left:1295px;top:783px;width:105px;height:20px;border:1px solid #7d8070;border-bottom:none;border-radius:5px 5px 0 0;background:#1f1f1b;"></div>
<div class="t" style="left:1298.50px;top:785.50px;font:normal normal 16px 'Liberation Sans';transform:scaleX(0.8960);transform-origin:0 0;">OS Commands</div>
<div class="a" style="left:1528px;top:786px;width:0;height:0;border-left:7.0px solid transparent;border-right:7.0px solid transparent;border-top:7px solid #eeeeea"></div>
<div class="t" style="left:785.20px;top:815.50px;font:normal normal 14.5px 'Liberation Sans';transform:scaleX(1.0642);transform-origin:0 0;">Commands execute without debug.  Use arrow keys for history.</div>
<div class="t" style="left:1492.20px;top:815.10px;font:normal normal 14.5px 'Liberation Sans';transform:scaleX(1.0463);transform-origin:0 0;"><u>O</u>ptions</div>
<div class="a" style="left:772px;top:846px;width:25px;height:288px;background:#56564f;"></div>
<div class="a m" style="left:805px;top:847px;color:#f8f8f2">2.7.3 (default, Apr 10 2013, 18:04:34)
[GCC 4.2.1 (Apple Inc. build 5666) (dot 3)]
Python Type "help", "copyright", "credits" or "license" for more information.
</div>
<div class="a m" style="left:771px;top:895px;color:#f8f8f2">&gt;&gt;&gt; imp</div>
<div class="a" style="left:830px;top:897px;width:1px;height:15px;background:#ffffff;"></div>
<div class="a" style="left:758px;top:911px;width:178px;height:171px;background:#25251f;box-shadow:0 2px 6px rgba(0,0,0,.6)"></div>
<div class="a" style="left:758px;top:1065px;width:163px;height:17px;background:#f5b82a;"></div>
<svg class="a" style="left:763px;top:914.5px" width="14" height="11" viewBox="0 0 14 11"><g fill="none" stroke="#e8e8e0" stroke-width="1.2"><rect x="1" y="4" width="12" height="6"/><rect x="4" y="1" width="6" height="3"/><path d="M1 7h12M5 4v3M9 4v3"/></g></svg>
<svg class="a" style="left:781px;top:914.5px" width="12" height="12" viewBox="0 0 12 12"><circle cx="6" cy="6" r="5.6" fill="#22dd22"/><text x="6" y="9.5" font-size="9" font-family="Liberation Sans" font-weight="bold" text-anchor="middle" fill="#115511">F</text></svg>
<div class="a m" style="left:800px;top:912.0px;color:#f8f8f2">getattr</div>
<svg class="a" style="left:778px;top:932.5px" width="16" height="10" viewBox="0 0 16 10"><g fill="none" stroke="#e8e8e0" stroke-width="1.2"><path d="M3.5 1.5 Q1 1.5 1 5 Q1 8.5 3.5 8.5 Q6 8.5 6.5 6.5 H15 V3.5 H6.5 Q6 1.5 3.5 1.5 Z"/><path d="M9 6.5 V8 M12 6.5 V8"/></g></svg>
<div class="a m" style="left:800px;top:929.0px;color:#f8f8f2">global</div>
<svg class="a" style="left:763px;top:948.5px" width="14" height="11" viewBox="0 0 14 11"><g fill="none" stroke="#e8e8e0" stroke-width="1.2"><rect x="1" y="4" width="12" height="6"/><rect x="4" y="1" width="6" height="3"/><path d="M1 7h12M5 4v3M9 4v3"/></g></svg>
<svg class="a" style="left:781px;top:948.5px" width="12" height="12" viewBox="0 0 12 12"><circle cx="6" cy="6" r="5.6" fill="#22dd22"/><text x="6" y="9.5" font-size="9" font-family="Liberation Sans" font-weight="bold" text-anchor="middle" fill="#115511">F</text></svg>
<div class="a m" style="left:800px;top:946.0px;color:#f8f8f2">globals</div>
<svg class="a" style="left:763px;top:965.5px" width="14" height="11" viewBox="0 0 14 11"><g fill="none" stroke="#e8e8e0" stroke-width="1.2"><rect x="1" y="4" width="12" height="6"/><rect x="4" y="1" width="6" height="3"/><path d="M1 7h12M5 4v3M9 4v3"/></g></svg>
<svg class="a" style="left:781px;top:965.5px" width="12" height="12" viewBox="0 0 12 12"><circle cx="6" cy="6" r="5.6" fill="#22dd22"/><text x="6" y="9.5" font-size="9" font-family="Liberation Sans" font-weight="bold" text-anchor="middle" fill="#115511">F</text></svg>
<div class="a m" style="left:800px;top:963.0px;color:#f8f8f2">hasattr</div>
<svg class="a" style="left:763px;top:982.5px" width="14" height="11" viewBox="0 0 14 11"><g fill="none" stroke="#e8e8e0" stroke-width="1.2"><rect x="1" y="4" width="12" height="6"/><rect x="4" y="1" width="6" height="3"/><path d="M1 7h12M5 4v3M9 4v3"/></g></svg>
<svg class="a" style="left:781px;top:982.5px" width="12" height="12" viewBox="0 0 12 12"><circle cx="6" cy="6" r="5.6" fill="#22dd22"/><text x="6" y="9.5" font-size="9" font-family="Liberation Sans" font-weight="bold" text-anchor="middle" fill="#115511">F</text></svg>
<div class="a m" style="left:800px;top:980.0px;color:#f8f8f2">hash</div>
<svg class="a" style="left:763px;top:999.5px" width="14" height="11" viewBox="0 0 14 11"><g fill="none" stroke="#e8e8e0" stroke-width="1.2"><rect x="1" y="4" width="12" height="6"/><rect x="4" y="1" width="6" height="3"/><path d="M1 7h12M5 4v3M9 4v3"/></g></svg>
<div class="a m" style="left:800px;top:997.0px;color:#f8f8f2">help</div>
<svg class="a" style="left:763px;top:1016.5px" width="14" height="11" viewBox="0 0 14 11"><g fill="none" stroke="#e8e8e0" stroke-width="1.2"><rect x="1" y="4" width="12" height="6"/><rect x="4" y="1" width="6" height="3"/><path d="M1 7h12M5 4v3M9 4v3"/></g></svg>
<svg class="a" style="left:781px;top:1016.5px" width="12" height="12" viewBox="0 0 12 12"><circle cx="6" cy="6" r="5.6" fill="#22dd22"/><text x="6" y="9.5" font-size="9" font-family="Liberation Sans" font-weight="bold" text-anchor="middle" fill="#115511">F</text></svg>
<div class="a m" style="left:800px;top:1014.0px;color:#f8f8f2">hex</div>
<svg class="a" style="left:763px;top:1033.5px" width="14" height="11" viewBox="0 0 14 11"><g fill="none" stroke="#e8e8e0" stroke-width="1.2"><rect x="1" y="4" width="12" height="6"/><rect x="4" y="1" width="6" height="3"/><path d="M1 7h12M5 4v3M9 4v3"/></g></svg>
<svg class="a" style="left:781px;top:1033.5px" width="12" height="12" viewBox="0 0 12 12"><circle cx="6" cy="6" r="5.6" fill="#22dd22"/><text x="6" y="9.5" font-size="9" font-family="Liberation Sans" font-weight="bold" text-anchor="middle" fill="#115511">F</text></svg>
<div class="a m" style="left:800px;top:1031.0px;color:#f8f8f2">id</div>
<svg class="a" style="left:778px;top:1051.5px" width="16" height="10" viewBox="0 0 16 10"><g fill="none" stroke="#e8e8e0" stroke-width="1.2"><path d="M3.5 1.5 Q1 1.5 1 5 Q1 8.5 3.5 8.5 Q6 8.5 6.5 6.5 H15 V3.5 H6.5 Q6 1.5 3.5 1.5 Z"/><path d="M9 6.5 V8 M12 6.5 V8"/></g></svg>
<div class="a m" style="left:800px;top:1048.0px;color:#f8f8f2">if</div>
<svg class="a" style="left:778px;top:1068.5px" width="16" height="10" viewBox="0 0 16 10"><g fill="none" stroke="#e8e8e0" stroke-width="1.2"><path d="M3.5 1.5 Q1 1.5 1 5 Q1 8.5 3.5 8.5 Q6 8.5 6.5 6.5 H15 V3.5 H6.5 Q6 1.5 3.5 1.5 Z"/><path d="M9 6.5 V8 M12 6.5 V8"/></g></svg>
<div class="a m" style="left:800px;top:1065.0px;color:#f8f8f2">import</div>
<div class="a" style="left:921px;top:912px;width:15px;height:170px;background:#1c1c18;border-left:1px solid #4a4a42"></div>
<div class="a" style="left:924px;top:917px;width:0;height:0;border-left:4.5px solid transparent;border-right:4.5px solid transparent;border-bottom:6px solid #eeeeea"></div>
<div class="a" style="left:924px;top:1070px;width:0;height:0;border-left:4.5px solid transparent;border-right:4.5px solid transparent;border-top:6px solid #eeeeea"></div>
<div class="a" style="left:922px;top:928px;width:13px;height:1px;background:#000;"></div>
<div class="a" style="left:922px;top:1063px;width:13px;height:1px;background:#55554c;"></div>
<div class="a" style="left:922px;top:977px;width:13px;height:19px;background:#5a5a4e;border:1px solid #7a7a6c"></div>
<div class="a" style="left:1563px;top:88px;width:21px;height:51px;border:1px solid #7d8070;border-right:none;border-radius:5px 0 0 5px;background:#1f1f1b;"></div>
<div class="a" style="left:1573.0px;top:113.5px;width:0;height:0"><div style="position:absolute;left:0;top:0;transform:rotate(-90deg);transform-origin:0 0"><div style="position:absolute;left:0;top:0">
<div class="t" style="left:-24.00px;top:-9.06px;font:normal normal 15px 'Liberation Sans';transform:scaleX(1.0281);transform-origin:0 0;">Project</div>
</div></div></div>
<div class="a" style="left:1563px;top:140px;width:21px;height:113px;border:1px solid #7d8070;border-right:none;border-radius:5px 0 0 5px;background:#1f1f1b;background:linear-gradient(90deg,#3c3c34,#33332c);border-left:2px solid #7a8ef0;border-top:1px solid #7a8ef0;border-bottom:1px solid #7a8ef0;"></div>
<div class="a" style="left:1573.0px;top:196.5px;width:0;height:0"><div style="position:absolute;left:0;top:0;transform:rotate(-90deg);transform-origin:0 0"><div style="position:absolute;left:0;top:0">
<div class="t" style="left:-52.00px;top:-9.06px;font:normal normal 15px 'Liberation Sans';transform:scaleX(0.9745);transform-origin:0 0;">Source Browser</div>
</div></div></div>
<div class="a" style="left:1563px;top:254px;width:21px;height:53px;border:1px solid #7d8070;border-right:none;border-radius:5px 0 0 5px;background:#1f1f1b;"></div>
<div class="a" style="left:1573.0px;top:280.5px;width:0;height:0"><div style="position:absolute;left:0;top:0;transform:rotate(-90deg);transform-origin:0 0"><div style="position:absolute;left:0;top:0">
<div class="t" style="left:-25.00px;top:-9.06px;font:normal normal 15px 'Liberation Sans';transform:scaleX(0.8565);transform-origin:0 0;">Snippets</div>
</div></div></div>
<div class="a" style="left:1563px;top:308px;width:21px;height:94px;border:1px solid #7d8070;border-right:none;border-radius:5px 0 0 5px;background:#1f1f1b;"></div>
<div class="a" style="left:1573.0px;top:355.0px;width:0;height:0"><div style="position:absolute;left:0;top:0;transform:rotate(-90deg);transform-origin:0 0"><div style="position:absolute;left:0;top:0">
<div class="t" style="left:-43.00px;top:-9.06px;font:normal normal 15px 'Liberation Sans';transform:scaleX(1.1210);transform-origin:0 0;">Refactoring</div>
</div></div></div>
<div class="a" style="left:1563px;top:403px;width:21px;height:44px;border:1px solid #7d8070;border-right:none;border-radius:5px 0 0 5px;background:#1f1f1b;"></div>
<div class="a" style="left:1573.0px;top:425.0px;width:0;height:0"><div style="position:absolute;left:0;top:0;transform:rotate(-90deg);transform-origin:0 0"><div style="position:absolute;left:0;top:0">
<div class="t" style="left:-20.00px;top:-9.06px;font:normal normal 15px 'Liberation Sans';transform:scaleX(0.9592);transform-origin:0 0;">PyLint</div>
</div></div></div>
<div class="a" style="left:1563px;top:610px;width:21px;height:119px;border:1px solid #7d8070;border-right:none;border-radius:5px 0 0 5px;background:#1f1f1b;"></div>
<div class="a" style="left:1573.0px;top:669.5px;width:0;height:0"><div style="position:absolute;left:0;top:0;transform:rotate(-90deg);transform-origin:0 0"><div style="position:absolute;left:0;top:0">
<div class="t" style="left:-56.00px;top:-9.06px;font:normal normal 15px 'Liberation Sans';">Source Assistant</div>
</div></div></div>
<div class="a" style="left:1563px;top:730px;width:21px;height:69px;border:1px solid #7d8070;border-right:none;border-radius:5px 0 0 5px;background:#1f1f1b;"></div>
<div class="a" style="left:1573.0px;top:764.5px;width:0;height:0"><div style="position:absolute;left:0;top:0;transform:rotate(-90deg);transform-origin:0 0"><div style="position:absolute;left:0;top:0">
<div class="t" style="left:-31.50px;top:-9.06px;font:normal normal 15px 'Liberation Sans';transform:scaleX(0.9329);transform-origin:0 0;">Call Stack</div>
</div></div></div>
<div class="a" style="left:1563px;top:800px;width:21px;height:88px;border:1px solid #7d8070;border-right:none;border-radius:5px 0 0 5px;background:#1f1f1b;background:linear-gradient(90deg,#3c3c34,#33332c);border-left:2px solid #7a8ef0;border-top:1px solid #7a8ef0;border-bottom:1px solid #7a8ef0;"></div>
<div class="a" style="left:1573.0px;top:844.0px;width:0;height:0"><div style="position:absolute;left:0;top:0;transform:rotate(-90deg);transform-origin:0 0"><div style="position:absolute;left:0;top:0">
<div class="t" style="left:-41.00px;top:-9.06px;font:normal normal 15px 'Liberation Sans';transform:scaleX(1.1046);transform-origin:0 0;">Indentation</div>
</div></div></div>
<div class="a" style="left:1563px;top:889px;width:21px;height:66px;border:1px solid #7d8070;border-right:none;border-radius:5px 0 0 5px;background:#1f1f1b;"></div>
<div class="a" style="left:1573.0px;top:922.0px;width:0;height:0"><div style="position:absolute;left:0;top:0;transform:rotate(-90deg);transform-origin:0 0"><div style="position:absolute;left:0;top:0">
<div class="t" style="left:-31.00px;top:-9.06px;font:normal normal 15px 'Liberation Sans';transform:scaleX(0.8546);transform-origin:0 0;">Open Files</div>
</div></div></div>
<div class="a" style="left:1583px;top:88px;width:351px;height:516px;border:1px solid #7d8070;"></div>
<div class="a" style="left:1587px;top:92px;width:189px;height:25px;background:#1f1f1b;border-radius:3px"></div>
<div class="a" style="left:1588px;top:93px;width:1px;height:22px;background:#77776a;"></div>
<div class="a" style="left:1589px;top:116px;width:186px;height:1px;background:#8a8a7c;"></div>
<div class="a" style="left:1754px;top:93px;width:1px;height:22px;background:#2c2c27;"></div>
<div class="a" style="left:1761px;top:97px;width:0;height:0;border-left:4.0px solid transparent;border-right:4.0px solid transparent;border-bottom:5px solid #e8e8e0"></div>
<div class="a" style="left:1761px;top:106px;width:0;height:0;border-left:4.0px solid transparent;border-right:4.0px solid transparent;border-top:5px solid #e8e8e0"></div>
<div class="t" style="left:1589.30px;top:93.04px;font:normal normal 15px 'Liberation Sans';">Browse Current Module</div>
<div class="t" style="left:1873.70px;top:91.90px;font:normal normal 14.5px 'Liberation Sans';transform:scaleX(1.0563);transform-origin:0 0;"><u>O</u>ptions</div>
<div class="a" style="left:1586px;top:118px;width:331px;height:468px;background:#282822;"></div>
<div class="a" style="left:1917px;top:118px;width:14px;height:468px;background:#1c1c18;border-left:1px solid #55554c"></div>
<div class="a" style="left:1919px;top:122px;width:0;height:0;border-left:4.5px solid transparent;border-right:4.5px solid transparent;border-bottom:6px solid #eeeeea"></div>
<div class="a" style="left:1919px;top:574px;width:0;height:0;border-left:4.5px solid transparent;border-right:4.5px solid transparent;border-top:6px solid #eeeeea"></div>
<div class="a" style="left:1918px;top:132px;width:13px;height:1px;background:#000;"></div>
<div class="a" style="left:1918px;top:568px;width:13px;height:1px;background:#55554c;"></div>
<div class="a" style="left:1917px;top:134px;width:13px;height:192px;background:#46463c;border:1px solid #66665a"></div>
<div class="a" style="left:1587px;top:586px;width:330px;height:15px;background:#1c1c18;border-top:1px solid #55554c"></div>
<div class="a" style="left:1590px;top:589px;width:0;height:0;border-top:4.5px solid transparent;border-bottom:4.5px solid transparent;border-right:6px solid #eeeeea"></div>
<div class="a" style="left:1904px;top:589px;width:0;height:0;border-top:4.5px solid transparent;border-bottom:4.5px solid transparent;border-left:6px solid #eeeeea"></div>
<div class="a" style="left:1603px;top:587px;width:203px;height:13px;background:#4a4a40;border:1px solid #66665a"></div>
<div class="a" style="left:1586px;top:118px;width:331px;height:468px;overflow:hidden">
<div class="a" style="left:10px;top:12px;width:1px;height:456px;background:repeating-linear-gradient(#7a7a70 0 1px,transparent 1px 2px)"></div>
<div class="a" style="left:30px;top:47px;width:1px;height:80px;background:repeating-linear-gradient(#7a7a70 0 1px,transparent 1px 2px)"></div>
<div class="a" style="left:30px;top:183px;width:1px;height:285px;background:repeating-linear-gradient(#7a7a70 0 1px,transparent 1px 2px)"></div>
<svg class="a" style="left:5px;top:2.5px" width="10" height="10"><rect x="0.5" y="0.5" width="9" height="9" fill="#1e1e1a" stroke="#b8b8b0"/><path d="M2.5 5 H7.5" stroke="#f0f0ea" stroke-width="2"/><path d="M5 2.5 V7.5" stroke="#f0f0ea" stroke-width="2"/></svg>
<div class="a" style="left:15px;top:7.5px;width:5px;height:1px;background:repeating-linear-gradient(90deg,#7a7a70 0 1px,transparent 1px 2px)"></div>
<svg class="a" style="left:24.5px;top:1.0px" width="13" height="13"><circle cx="6.5" cy="6.5" r="6" fill="#1fe01f"/><text x="6.5" y="10" font-size="9.5" font-family="Liberation Sans" text-anchor="middle" fill="#0a4a0a">F</text></svg>
<div class="a" style="left:42px;top:-1.0600000000000112px;width:0;height:0">

<div class="t" style="left:0.00px;top:0.00px;font:normal normal 15px 'Liberation Sans';transform:scaleX(1.01);transform-origin:0 0;">BuildMarkupFromExceptionInfo(expanded,</div>
</div>
<svg class="a" style="left:5px;top:19.5px" width="10" height="10"><rect x="0.5" y="0.5" width="9" height="9" fill="#1e1e1a" stroke="#b8b8b0"/><path d="M2.5 5 H7.5" stroke="#f0f0ea" stroke-width="2"/><path d="M5 2.5 V7.5" stroke="#f0f0ea" stroke-width="2"/></svg>
<div class="a" style="left:15px;top:24.5px;width:5px;height:1px;background:repeating-linear-gradient(90deg,#7a7a70 0 1px,transparent 1px 2px)"></div>
<svg class="a" style="left:24.5px;top:18.0px" width="13" height="13"><circle cx="6.5" cy="6.5" r="6" fill="#1fe01f"/><text x="6.5" y="10" font-size="9.5" font-family="Liberation Sans" text-anchor="middle" fill="#0a4a0a">C</text></svg>
<div class="a" style="left:42px;top:15.939999999999989px;width:0;height:0">

<div class="t" style="left:0.00px;top:0.00px;font:normal normal 15px 'Liberation Sans';transform:scaleX(1.01);transform-origin:0 0;">CDebugExceptionsPanel</div>
</div>
<svg class="a" style="left:5px;top:36.5px" width="10" height="10"><rect x="0.5" y="0.5" width="9" height="9" fill="#1e1e1a" stroke="#b8b8b0"/><path d="M2.5 5 H7.5" stroke="#f0f0ea" stroke-width="2"/></svg>
<div class="a" style="left:15px;top:41.5px;width:5px;height:1px;background:repeating-linear-gradient(90deg,#7a7a70 0 1px,transparent 1px 2px)"></div>
<svg class="a" style="left:24.5px;top:35.0px" width="13" height="13"><circle cx="6.5" cy="6.5" r="6" fill="#1fe01f"/><text x="6.5" y="10" font-size="9.5" font-family="Liberation Sans" text-anchor="middle" fill="#0a4a0a">C</text></svg>
<div class="a" style="left:42px;top:32.93999999999999px;width:0;height:0">

<div class="t" style="left:0.00px;top:0.00px;font:normal normal 15px 'Liberation Sans';transform:scaleX(1.01);transform-origin:0 0;">CExceptionInfo</div>
</div>
<div class="a" style="left:30px;top:58.5px;width:10px;height:1px;background:repeating-linear-gradient(90deg,#7a7a70 0 1px,transparent 1px 2px)"></div>
<div class="a" style="left:48.5px;top:55.5px;width:5px;height:5px;border-radius:3px;background:#22dd22"></div>
<div class="a" style="left:62px;top:49.93999999999999px;width:0;height:0">

<div class="t" style="left:0.00px;top:0.00px;font:normal normal 15px 'Liberation Sans';transform:scaleX(1.01);transform-origin:0 0;">repr</div>
</div>
<div class="a" style="left:30px;top:75.5px;width:10px;height:1px;background:repeating-linear-gradient(90deg,#7a7a70 0 1px,transparent 1px 2px)"></div>
<div class="a" style="left:48.5px;top:72.5px;width:5px;height:5px;border-radius:3px;background:#22dd22"></div>
<div class="a" style="left:62px;top:66.93999999999998px;width:0;height:0">

<div class="t" style="left:0.00px;top:0.00px;font:normal normal 15px 'Liberation Sans';transform:scaleX(1.01);transform-origin:0 0;">stack</div>
</div>
<div class="a" style="left:30px;top:92.5px;width:10px;height:1px;background:repeating-linear-gradient(90deg,#7a7a70 0 1px,transparent 1px 2px)"></div>
<div class="a" style="left:48.5px;top:89.5px;width:5px;height:5px;border-radius:3px;background:#22dd22"></div>
<div class="a" style="left:62px;top:83.93999999999998px;width:0;height:0">

<div class="t" style="left:0.00px;top:0.00px;font:normal normal 15px 'Liberation Sans';transform:scaleX(1.01);transform-origin:0 0;">type</div>
</div>
<div class="a" style="left:30px;top:109.5px;width:10px;height:1px;background:repeating-linear-gradient(90deg,#7a7a70 0 1px,transparent 1px 2px)"></div>
<div class="a" style="left:48.5px;top:106.5px;width:5px;height:5px;border-radius:3px;background:#22dd22"></div>
<div class="a" style="left:62px;top:100.93999999999998px;width:0;height:0">

<div class="t" style="left:0.00px;top:0.00px;font:normal normal 15px 'Liberation Sans';transform:scaleX(1.01);transform-origin:0 0;">__class__</div>
</div>
<svg class="a" style="left:25px;top:121.5px" width="10" height="10"><rect x="0.5" y="0.5" width="9" height="9" fill="#1e1e1a" stroke="#b8b8b0"/><path d="M2.5 5 H7.5" stroke="#f0f0ea" stroke-width="2"/><path d="M5 2.5 V7.5" stroke="#f0f0ea" stroke-width="2"/></svg>
<div class="a" style="left:35px;top:126.5px;width:5px;height:1px;background:repeating-linear-gradient(90deg,#7a7a70 0 1px,transparent 1px 2px)"></div>
<svg class="a" style="left:44.5px;top:120.0px" width="13" height="13"><circle cx="6.5" cy="6.5" r="6" fill="#1fe01f"/><text x="6.5" y="10" font-size="9.5" font-family="Liberation Sans" text-anchor="middle" fill="#0a4a0a">M</text></svg>
<div class="a" style="left:62px;top:117.93999999999998px;width:0;height:0">

<div class="t" style="left:0.00px;top:0.00px;font:normal normal 15px 'Liberation Sans';transform:scaleX(1.01);transform-origin:0 0;">__init__(self)</div>
</div>
<svg class="a" style="left:5px;top:138.5px" width="10" height="10"><rect x="0.5" y="0.5" width="9" height="9" fill="#1e1e1a" stroke="#b8b8b0"/><path d="M2.5 5 H7.5" stroke="#f0f0ea" stroke-width="2"/><path d="M5 2.5 V7.5" stroke="#f0f0ea" stroke-width="2"/></svg>
<div class="a" style="left:15px;top:143.5px;width:5px;height:1px;background:repeating-linear-gradient(90deg,#7a7a70 0 1px,transparent 1px 2px)"></div>
<svg class="a" style="left:24.5px;top:137.0px" width="13" height="13"><circle cx="6.5" cy="6.5" r="6" fill="#1fe01f"/><text x="6.5" y="10" font-size="9.5" font-family="Liberation Sans" text-anchor="middle" fill="#0a4a0a">C</text></svg>
<div class="a" style="left:42px;top:134.94px;width:0;height:0">

<div class="t" style="left:0.00px;top:0.00px;font:normal normal 15px 'Liberation Sans';transform:scaleX(1.01);transform-origin:0 0;">CExceptionPanelWidget</div>
</div>
<svg class="a" style="left:5px;top:155.5px" width="10" height="10"><rect x="0.5" y="0.5" width="9" height="9" fill="#1e1e1a" stroke="#b8b8b0"/><path d="M2.5 5 H7.5" stroke="#f0f0ea" stroke-width="2"/><path d="M5 2.5 V7.5" stroke="#f0f0ea" stroke-width="2"/></svg>
<div class="a" style="left:15px;top:160.5px;width:5px;height:1px;background:repeating-linear-gradient(90deg,#7a7a70 0 1px,transparent 1px 2px)"></div>
<svg class="a" style="left:24.5px;top:154.0px" width="13" height="13"><circle cx="6.5" cy="6.5" r="6" fill="#1fe01f"/><text x="6.5" y="10" font-size="9.5" font-family="Liberation Sans" text-anchor="middle" fill="#0a4a0a">C</text></svg>
<div class="a" style="left:42px;top:151.94px;width:0;height:0">

<div class="t" style="left:0.00px;top:0.00px;font:normal normal 15px 'Liberation Sans';transform:scaleX(1.01);transform-origin:0 0;">CExceptions(wingview.CViewController)</div>
</div>
<svg class="a" style="left:5px;top:172.5px" width="10" height="10"><rect x="0.5" y="0.5" width="9" height="9" fill="#1e1e1a" stroke="#b8b8b0"/><path d="M2.5 5 H7.5" stroke="#f0f0ea" stroke-width="2"/></svg>
<div class="a" style="left:15px;top:177.5px;width:5px;height:1px;background:repeating-linear-gradient(90deg,#7a7a70 0 1px,transparent 1px 2px)"></div>
<svg class="a" style="left:24.5px;top:171.0px" width="13" height="13"><circle cx="6.5" cy="6.5" r="6" fill="#1fe01f"/><text x="6.5" y="10" font-size="9.5" font-family="Liberation Sans" text-anchor="middle" fill="#0a4a0a">C</text></svg>
<div class="a" style="left:42px;top:168.94px;width:0;height:0">

<div class="t" style="left:0.00px;top:0.00px;font:normal normal 15px 'Liberation Sans';transform:scaleX(1.01);transform-origin:0 0;">CExceptionsCommands</div>
</div>
<svg class="a" style="left:25px;top:189.5px" width="10" height="10"><rect x="0.5" y="0.5" width="9" height="9" fill="#1e1e1a" stroke="#b8b8b0"/><path d="M2.5 5 H7.5" stroke="#f0f0ea" stroke-width="2"/><path d="M5 2.5 V7.5" stroke="#f0f0ea" stroke-width="2"/></svg>
<div class="a" style="left:35px;top:194.5px;width:5px;height:1px;background:repeating-linear-gradient(90deg,#7a7a70 0 1px,transparent 1px 2px)"></div>
<svg class="a" style="left:44.5px;top:188.0px" width="13" height="13"><circle cx="6.5" cy="6.5" r="6" fill="#1fe01f"/><text x="6.5" y="10" font-size="9.5" font-family="Liberation Sans" text-anchor="middle" fill="#0a4a0a">M</text></svg>
<div class="a" style="left:62px;top:185.94px;width:0;height:0">

<div class="t" style="left:0.00px;top:0.00px;font:normal normal 15px 'Liberation Sans';transform:scaleX(1.01);transform-origin:0 0;">add_signal(self, signal)</div>
</div>
<svg class="a" style="left:25px;top:206.5px" width="10" height="10"><rect x="0.5" y="0.5" width="9" height="9" fill="#1e1e1a" stroke="#b8b8b0"/><path d="M2.5 5 H7.5" stroke="#f0f0ea" stroke-width="2"/><path d="M5 2.5 V7.5" stroke="#f0f0ea" stroke-width="2"/></svg>
<div class="a" style="left:35px;top:211.5px;width:5px;height:1px;background:repeating-linear-gradient(90deg,#7a7a70 0 1px,transparent 1px 2px)"></div>
<svg class="a" style="left:44.5px;top:205.0px" width="13" height="13"><circle cx="6.5" cy="6.5" r="6" fill="#1fe01f"/><text x="6.5" y="10" font-size="9.5" font-family="Liberation Sans" text-anchor="middle" fill="#0a4a0a">M</text></svg>
<div class="a" style="left:62px;top:202.94px;width:0;height:0">

<div class="t" style="left:0.00px;top:0.00px;font:normal normal 15px 'Liberation Sans';transform:scaleX(1.01);transform-origin:0 0;">class_connect(cls, type, proc, extra)</div>
</div>
<svg class="a" style="left:25px;top:223.5px" width="10" height="10"><rect x="0.5" y="0.5" width="9" height="9" fill="#1e1e1a" stroke="#b8b8b0"/><path d="M2.5 5 H7.5" stroke="#f0f0ea" stroke-width="2"/><path d="M5 2.5 V7.5" stroke="#f0f0ea" stroke-width="2"/></svg>
<div class="a" style="left:35px;top:228.5px;width:5px;height:1px;background:repeating-linear-gradient(90deg,#7a7a70 0 1px,transparent 1px 2px)"></div>
<svg class="a" style="left:44.5px;top:222.0px" width="13" height="13"><circle cx="6.5" cy="6.5" r="6" fill="#1fe01f"/><text x="6.5" y="10" font-size="9.5" font-family="Liberation Sans" text-anchor="middle" fill="#0a4a0a">M</text></svg>
<div class="a" style="left:62px;top:219.94px;width:0;height:0">

<div class="t" style="left:0.00px;top:0.00px;font:normal normal 15px 'Liberation Sans';transform:scaleX(1.01);transform-origin:0 0;">class_connect_while_alive(cls, type, proc</div>
</div>
<svg class="a" style="left:25px;top:240.5px" width="10" height="10"><rect x="0.5" y="0.5" width="9" height="9" fill="#1e1e1a" stroke="#b8b8b0"/><path d="M2.5 5 H7.5" stroke="#f0f0ea" stroke-width="2"/><path d="M5 2.5 V7.5" stroke="#f0f0ea" stroke-width="2"/></svg>
<div class="a" style="left:35px;top:245.5px;width:5px;height:1px;background:repeating-linear-gradient(90deg,#7a7a70 0 1px,transparent 1px 2px)"></div>
<svg class="a" style="left:44.5px;top:239.0px" width="13" height="13"><circle cx="6.5" cy="6.5" r="6" fill="#1fe01f"/><text x="6.5" y="10" font-size="9.5" font-family="Liberation Sans" text-anchor="middle" fill="#0a4a0a">M</text></svg>
<div class="a" style="left:62px;top:236.94px;width:0;height:0">

<div class="t" style="left:0.00px;top:0.00px;font:normal normal 15px 'Liberation Sans';transform:scaleX(1.01);transform-origin:0 0;">class_disconnect(cls, handler_id)</div>
</div>
<svg class="a" style="left:25px;top:257.5px" width="10" height="10"><rect x="0.5" y="0.5" width="9" height="9" fill="#1e1e1a" stroke="#b8b8b0"/><path d="M2.5 5 H7.5" stroke="#f0f0ea" stroke-width="2"/><path d="M5 2.5 V7.5" stroke="#f0f0ea" stroke-width="2"/></svg>
<div class="a" style="left:35px;top:262.5px;width:5px;height:1px;background:repeating-linear-gradient(90deg,#7a7a70 0 1px,transparent 1px 2px)"></div>
<svg class="a" style="left:44.5px;top:256.0px" width="13" height="13"><circle cx="6.5" cy="6.5" r="6" fill="#1fe01f"/><text x="6.5" y="10" font-size="9.5" font-family="Liberation Sans" text-anchor="middle" fill="#0a4a0a">M</text></svg>
<div class="a" style="left:62px;top:253.94px;width:0;height:0">

<div class="t" style="left:0.00px;top:0.00px;font:normal normal 15px 'Liberation Sans';transform:scaleX(1.01);transform-origin:0 0;">clear(self)</div>
</div>
<svg class="a" style="left:25px;top:274.5px" width="10" height="10"><rect x="0.5" y="0.5" width="9" height="9" fill="#1e1e1a" stroke="#b8b8b0"/><path d="M2.5 5 H7.5" stroke="#f0f0ea" stroke-width="2"/><path d="M5 2.5 V7.5" stroke="#f0f0ea" stroke-width="2"/></svg>
<div class="a" style="left:35px;top:279.5px;width:5px;height:1px;background:repeating-linear-gradient(90deg,#7a7a70 0 1px,transparent 1px 2px)"></div>
<svg class="a" style="left:44.5px;top:273.0px" width="13" height="13"><circle cx="6.5" cy="6.5" r="6" fill="#1fe01f"/><text x="6.5" y="10" font-size="9.5" font-family="Liberation Sans" text-anchor="middle" fill="#0a4a0a">M</text></svg>
<div class="a" style="left:62px;top:270.94px;width:0;height:0">

<div class="t" style="left:0.00px;top:0.00px;font:normal normal 15px 'Liberation Sans';transform:scaleX(1.01);transform-origin:0 0;">connect(self, type, proc, extra)</div>
</div>
<svg class="a" style="left:25px;top:291.5px" width="10" height="10"><rect x="0.5" y="0.5" width="9" height="9" fill="#1e1e1a" stroke="#b8b8b0"/><path d="M2.5 5 H7.5" stroke="#f0f0ea" stroke-width="2"/><path d="M5 2.5 V7.5" stroke="#f0f0ea" stroke-width="2"/></svg>
<div class="a" style="left:35px;top:296.5px;width:5px;height:1px;background:repeating-linear-gradient(90deg,#7a7a70 0 1px,transparent 1px 2px)"></div>
<svg class="a" style="left:44.5px;top:290.0px" width="13" height="13"><circle cx="6.5" cy="6.5" r="6" fill="#1fe01f"/><text x="6.5" y="10" font-size="9.5" font-family="Liberation Sans" text-anchor="middle" fill="#0a4a0a">M</text></svg>
<div class="a" style="left:62px;top:287.94px;width:0;height:0">

<div class="t" style="left:0.00px;top:0.00px;font:normal normal 15px 'Liberation Sans';transform:scaleX(1.01);transform-origin:0 0;">connect_while_alive(self, type, proc, aliv</div>
</div>
<svg class="a" style="left:25px;top:308.5px" width="10" height="10"><rect x="0.5" y="0.5" width="9" height="9" fill="#1e1e1a" stroke="#b8b8b0"/><path d="M2.5 5 H7.5" stroke="#f0f0ea" stroke-width="2"/><path d="M5 2.5 V7.5" stroke="#f0f0ea" stroke-width="2"/></svg>
<div class="a" style="left:35px;top:313.5px;width:5px;height:1px;background:repeating-linear-gradient(90deg,#7a7a70 0 1px,transparent 1px 2px)"></div>
<svg class="a" style="left:44.5px;top:307.0px" width="13" height="13"><circle cx="6.5" cy="6.5" r="6" fill="#1fe01f"/><text x="6.5" y="10" font-size="9.5" font-family="Liberation Sans" text-anchor="middle" fill="#0a4a0a">M</text></svg>
<div class="a" style="left:62px;top:304.94px;width:0;height:0">

<div class="t" style="left:0.00px;top:0.00px;font:normal normal 15px 'Liberation Sans';transform:scaleX(1.01);transform-origin:0 0;">copy(self)</div>
</div>
<svg class="a" style="left:25px;top:325.5px" width="10" height="10"><rect x="0.5" y="0.5" width="9" height="9" fill="#1e1e1a" stroke="#b8b8b0"/><path d="M2.5 5 H7.5" stroke="#f0f0ea" stroke-width="2"/><path d="M5 2.5 V7.5" stroke="#f0f0ea" stroke-width="2"/></svg>
<div class="a" style="left:35px;top:330.5px;width:5px;height:1px;background:repeating-linear-gradient(90deg,#7a7a70 0 1px,transparent 1px 2px)"></div>
<svg class="a" style="left:44.5px;top:324.0px" width="13" height="13"><circle cx="6.5" cy="6.5" r="6" fill="#1fe01f"/><text x="6.5" y="10" font-size="9.5" font-family="Liberation Sans" text-anchor="middle" fill="#0a4a0a">M</text></svg>
<div class="a" style="left:62px;top:321.94px;width:0;height:0">

<div class="t" style="left:0.00px;top:0.00px;font:normal normal 15px 'Liberation Sans';transform:scaleX(1.01);transform-origin:0 0;">destroy(self)</div>
</div>
<svg class="a" style="left:25px;top:342.5px" width="10" height="10"><rect x="0.5" y="0.5" width="9" height="9" fill="#1e1e1a" stroke="#b8b8b0"/><path d="M2.5 5 H7.5" stroke="#f0f0ea" stroke-width="2"/><path d="M5 2.5 V7.5" stroke="#f0f0ea" stroke-width="2"/></svg>
<div class="a" style="left:35px;top:347.5px;width:5px;height:1px;background:repeating-linear-gradient(90deg,#7a7a70 0 1px,transparent 1px 2px)"></div>
<svg class="a" style="left:44.5px;top:341.0px" width="13" height="13"><circle cx="6.5" cy="6.5" r="6" fill="#1fe01f"/><text x="6.5" y="10" font-size="9.5" font-family="Liberation Sans" text-anchor="middle" fill="#0a4a0a">M</text></svg>
<div class="a" style="left:62px;top:338.94px;width:0;height:0">

<div class="t" style="left:0.00px;top:0.00px;font:normal normal 15px 'Liberation Sans';transform:scaleX(1.01);transform-origin:0 0;">destroyed(self)</div>
</div>
<svg class="a" style="left:25px;top:359.5px" width="10" height="10"><rect x="0.5" y="0.5" width="9" height="9" fill="#1e1e1a" stroke="#b8b8b0"/><path d="M2.5 5 H7.5" stroke="#f0f0ea" stroke-width="2"/><path d="M5 2.5 V7.5" stroke="#f0f0ea" stroke-width="2"/></svg>
<div class="a" style="left:35px;top:364.5px;width:5px;height:1px;background:repeating-linear-gradient(90deg,#7a7a70 0 1px,transparent 1px 2px)"></div>
<svg class="a" style="left:44.5px;top:358.0px" width="13" height="13"><circle cx="6.5" cy="6.5" r="6" fill="#1fe01f"/><text x="6.5" y="10" font-size="9.5" font-family="Liberation Sans" text-anchor="middle" fill="#0a4a0a">M</text></svg>
<div class="a" style="left:62px;top:355.94px;width:0;height:0">

<div class="t" style="left:0.00px;top:0.00px;font:normal normal 15px 'Liberation Sans';transform:scaleX(1.01);transform-origin:0 0;">disconnect(self, id)</div>
</div>
<svg class="a" style="left:25px;top:376.5px" width="10" height="10"><rect x="0.5" y="0.5" width="9" height="9" fill="#1e1e1a" stroke="#b8b8b0"/><path d="M2.5 5 H7.5" stroke="#f0f0ea" stroke-width="2"/><path d="M5 2.5 V7.5" stroke="#f0f0ea" stroke-width="2"/></svg>
<div class="a" style="left:35px;top:381.5px;width:5px;height:1px;background:repeating-linear-gradient(90deg,#7a7a70 0 1px,transparent 1px 2px)"></div>
<svg class="a" style="left:44.5px;top:375.0px" width="13" height="13"><circle cx="6.5" cy="6.5" r="6" fill="#1fe01f"/><text x="6.5" y="10" font-size="9.5" font-family="Liberation Sans" text-anchor="middle" fill="#0a4a0a">M</text></svg>
<div class="a" style="left:62px;top:372.94px;width:0;height:0">

<div class="t" style="left:0.00px;top:0.00px;font:normal normal 15px 'Liberation Sans';transform:scaleX(1.01);transform-origin:0 0;">disconnect_by_func(self, func)</div>
</div>
<svg class="a" style="left:25px;top:393.5px" width="10" height="10"><rect x="0.5" y="0.5" width="9" height="9" fill="#1e1e1a" stroke="#b8b8b0"/><path d="M2.5 5 H7.5" stroke="#f0f0ea" stroke-width="2"/><path d="M5 2.5 V7.5" stroke="#f0f0ea" stroke-width="2"/></svg>
<div class="a" style="left:35px;top:398.5px;width:5px;height:1px;background:repeating-linear-gradient(90deg,#7a7a70 0 1px,transparent 1px 2px)"></div>
<svg class="a" style="left:44.5px;top:392.0px" width="13" height="13"><circle cx="6.5" cy="6.5" r="6" fill="#1fe01f"/><text x="6.5" y="10" font-size="9.5" font-family="Liberation Sans" text-anchor="middle" fill="#0a4a0a">M</text></svg>
<div class="a" style="left:62px;top:389.94000000000005px;width:0;height:0">

<div class="t" style="left:0.00px;top:0.00px;font:normal normal 15px 'Liberation Sans';transform:scaleX(1.01);transform-origin:0 0;">emit(self, type, args)</div>
</div>
<svg class="a" style="left:25px;top:410.5px" width="10" height="10"><rect x="0.5" y="0.5" width="9" height="9" fill="#1e1e1a" stroke="#b8b8b0"/><path d="M2.5 5 H7.5" stroke="#f0f0ea" stroke-width="2"/><path d="M5 2.5 V7.5" stroke="#f0f0ea" stroke-width="2"/></svg>
<div class="a" style="left:35px;top:415.5px;width:5px;height:1px;background:repeating-linear-gradient(90deg,#7a7a70 0 1px,transparent 1px 2px)"></div>
<svg class="a" style="left:44.5px;top:409.0px" width="13" height="13"><circle cx="6.5" cy="6.5" r="6" fill="#1fe01f"/><text x="6.5" y="10" font-size="9.5" font-family="Liberation Sans" text-anchor="middle" fill="#0a4a0a">M</text></svg>
<div class="a" style="left:62px;top:406.94000000000005px;width:0;height:0">

<div class="t" style="left:0.00px;top:0.00px;font:normal normal 15px 'Liberation Sans';transform:scaleX(1.01);transform-origin:0 0;">emit_stop_by_name(self, name)</div>
</div>
<div class="a" style="left:30px;top:432.5px;width:10px;height:1px;background:repeating-linear-gradient(90deg,#7a7a70 0 1px,transparent 1px 2px)"></div>
<div class="a" style="left:48.5px;top:429.5px;width:5px;height:5px;border-radius:3px;background:#22dd22"></div>
<div class="a" style="left:62px;top:423.94000000000005px;width:0;height:0">

<div class="t" style="left:0.00px;top:0.00px;font:normal normal 15px 'Liberation Sans';transform:scaleX(1.01);transform-origin:0 0;">fI18NModule</div>
</div>
<div class="a" style="left:30px;top:449.5px;width:10px;height:1px;background:repeating-linear-gradient(90deg,#7a7a70 0 1px,transparent 1px 2px)"></div>
<div class="a" style="left:48.5px;top:446.5px;width:5px;height:5px;border-radius:3px;background:#22dd22"></div>
<div class="a" style="left:62px;top:440.94000000000005px;width:0;height:0">

<div class="t" style="left:0.00px;top:0.00px;font:normal normal 15px 'Liberation Sans';transform:scaleX(1.01);transform-origin:0 0;">fView</div>
</div>
<svg class="a" style="left:25px;top:461.5px" width="10" height="10"><rect x="0.5" y="0.5" width="9" height="9" fill="#1e1e1a" stroke="#b8b8b0"/><path d="M2.5 5 H7.5" stroke="#f0f0ea" stroke-width="2"/><path d="M5 2.5 V7.5" stroke="#f0f0ea" stroke-width="2"/></svg>
<div class="a" style="left:35px;top:466.5px;width:5px;height:1px;background:repeating-linear-gradient(90deg,#7a7a70 0 1px,transparent 1px 2px)"></div>
<svg class="a" style="left:44.5px;top:460.0px" width="13" height="13"><circle cx="6.5" cy="6.5" r="6" fill="#1fe01f"/><text x="6.5" y="10" font-size="9.5" font-family="Liberation Sans" text-anchor="middle" fill="#0a4a0a">M</text></svg>
<div class="a" style="left:62px;top:457.94000000000005px;width:0;height:0">

<div class="t" style="left:0.00px;top:0.00px;font:normal normal 15px 'Liberation Sans';transform:scaleX(1.01);transform-origin:0 0;">handler_disconnect(self, id)</div>
</div>
</div>
<div class="a" style="left:1583px;top:610px;width:351px;height:527px;border:1px solid #7d8070;"></div>
<div class="t" style="left:1596.80px;top:627.04px;font:normal normal 15px 'Liberation Sans';transform:scaleX(0.9738);transform-origin:0 0;">File:</div>
<div class="t" style="left:1683.30px;top:627.04px;font:normal normal 15px 'Liberation Sans';transform:scaleX(1.0336);transform-origin:0 0;">excpanel.py (debug/client)</div>
<div class="t" style="left:1596.80px;top:655.34px;font:normal normal 15px 'Liberation Sans';transform:scaleX(1.0278);transform-origin:0 0;">Status:</div>
<div class="t" style="left:1683.30px;top:655.34px;font:normal normal 15px 'Liberation Sans';transform:scaleX(0.9465);transform-origin:0 0;">Spaces Only</div>
<div class="t" style="left:1596.80px;top:684.24px;font:normal normal 15px 'Liberation Sans';transform:scaleX(1.0251);transform-origin:0 0;">Counts:</div>
<div class="t" style="left:1683.30px;top:684.24px;font:normal normal 15px 'Liberation Sans';transform:scaleX(1.1086);transform-origin:0 0;">604 (0t/604s/0t+s)</div>
<div class="t" style="left:1596.80px;top:715.44px;font:normal normal 15px 'Liberation Sans';transform:scaleX(1.0270);transform-origin:0 0;">T<u>a</u>b size:</div>
<div class="a" style="left:1683px;top:711px;width:40px;height:26px;background:#252520;border-radius:3px;border:1px solid #16160f;border-bottom:2px solid #8a8a7c"></div>
<div class="t" style="left:1689.00px;top:715.44px;font:normal normal 15px 'Liberation Sans';color:#9c9c88;transform:scaleX(0.9588);transform-origin:0 0;">8</div>
<div class="t" style="left:1722.90px;top:715.44px;font:normal normal 15px 'Liberation Sans';transform:scaleX(1.0180);transform-origin:0 0;">(from preferences)</div>
<div class="t" style="left:1596.80px;top:748.34px;font:normal normal 15px 'Liberation Sans';transform:scaleX(1.0167);transform-origin:0 0;"><u>I</u>ndent size:</div>
<div class="a" style="left:1683px;top:744px;width:40px;height:26px;background:#252520;border-radius:3px;border:1px solid #16160f;border-bottom:2px solid #8a8a7c"></div>
<div class="t" style="left:1689.00px;top:748.34px;font:normal normal 15px 'Liberation Sans';transform:scaleX(0.9588);transform-origin:0 0;">2</div>
<div class="t" style="left:1722.90px;top:748.34px;font:normal normal 15px 'Liberation Sans';transform:scaleX(1.0441);transform-origin:0 0;">(from file contents)</div>
<div class="a" style="left:1588px;top:785px;width:340px;height:1px;background:#1a1a16;"></div>
<div class="a" style="left:1588px;top:786px;width:340px;height:1px;background:#3a3a33;"></div>
<div class="t" style="left:1588.40px;top:791.74px;font:normal normal 15px 'Liberation Sans';transform:scaleX(0.9880);transform-origin:0 0;">Conversions:</div>
<div class="a" style="left:1589px;top:837px;width:340px;height:295px;border:1px solid #7d8070;"></div>
<div class="a" style="left:1589px;top:814px;width:91px;height:24px;border:1px solid #7d8070;border-bottom:none;border-radius:5px 5px 0 0;background:#1f1f1b;background:linear-gradient(#3c3c34,#33332c);border-top:2px solid #7a8ef0;border-left:1px solid #7a8ef0;"></div>
<div class="t" style="left:1594.00px;top:818.74px;font:normal normal 15px 'Liberation Sans';transform:scaleX(0.9524);transform-origin:0 0;"><u>S</u>paces Only</div>
<div class="a" style="left:1681px;top:816px;width:72px;height:22px;border:1px solid #7d8070;border-bottom:none;border-radius:5px 5px 0 0;background:#1f1f1b;"></div>
<div class="t" style="left:1683.00px;top:818.74px;font:normal normal 15px 'Liberation Sans';transform:scaleX(1.0194);transform-origin:0 0;"><u>T</u>abs Only</div>
<div class="a" style="left:1754px;top:816px;width:149px;height:22px;border:1px solid #7d8070;border-bottom:none;border-radius:5px 5px 0 0;background:#1f1f1b;"></div>
<div class="t" style="left:1757.30px;top:818.74px;font:normal normal 15px 'Liberation Sans';transform:scaleX(0.9891);transform-origin:0 0;"><u>M</u>ixed Tabs &amp; Spaces</div>
<div class="t" style="left:1597.30px;top:845.09px;font:normal bold 15px 'Liberation Sans';transform:scaleX(1.0079);transform-origin:0 0;">Availability:</div>
<div class="t" style="left:1597.30px;top:874.14px;font:normal normal 15px 'Liberation Sans';transform:scaleX(1.0122);transform-origin:0 0;">This file can be converted. Select the desired</div>
<div class="t" style="left:1597.30px;top:891.74px;font:normal normal 15px 'Liberation Sans';transform:scaleX(1.0147);transform-origin:0 0;">indent size above.</div>
<div class="t" style="left:1597.30px;top:920.49px;font:normal bold 15px 'Liberation Sans';transform:scaleX(0.9541);transform-origin:0 0;">Action:</div>
<div class="t" style="left:1597.30px;top:949.44px;font:normal normal 15px 'Liberation Sans';transform:scaleX(1.0477);transform-origin:0 0;">Wing will convert all indentation in the file to</div>
<div class="t" style="left:1597.30px;top:966.54px;font:normal normal 15px 'Liberation Sans';transform:scaleX(0.9845);transform-origin:0 0;">use only spaces.</div>
<div class="a" style="left:1590px;top:1104px;width:338px;height:26px;background:#262621;border-top:2px solid #18180f;border-left:1px solid #66665c"></div>
<div class="t" style="left:1731.65px;top:1108.24px;font:normal normal 15px 'Liberation Sans';transform:scaleX(1.0146);transform-origin:0 0;"><u>C</u>onvert</div>
</body></html>
